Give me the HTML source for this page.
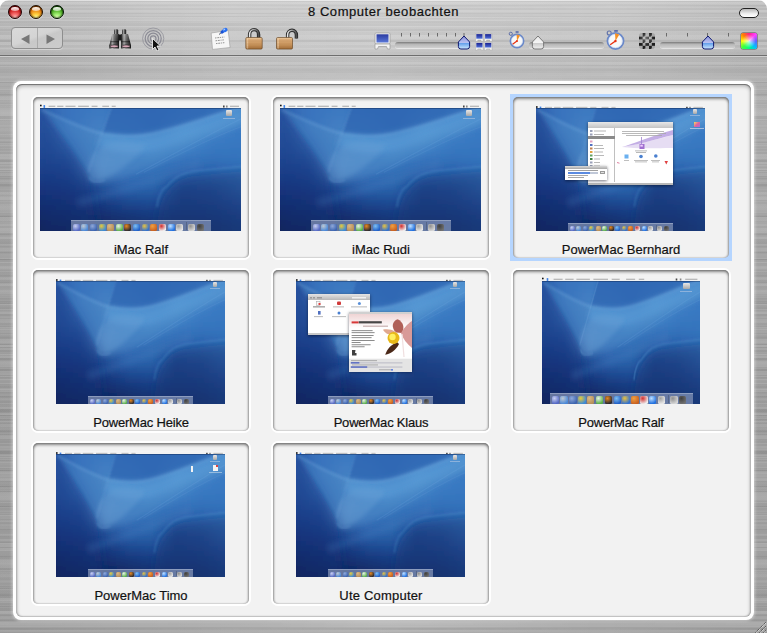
<!DOCTYPE html>
<html><head><meta charset="utf-8">
<style>

*{margin:0;padding:0;box-sizing:border-box}
html,body{width:767px;height:633px;overflow:hidden;background:#ffffff}
body{position:relative;font-family:"Liberation Sans",sans-serif}
.abs{position:absolute}
#metal{left:0;top:0;width:767px;height:633px;border-radius:9px 9px 0 0;
 background:linear-gradient(#f2f2f2 0,#f2f2f2 1px,#cdcdcd 1px,#c9c9c9 20px,#c4c4c4 54px,#c2c2c2 57px,#b8b8b8 90px,#ababab 250px,#a8a8a8 450px,#aaaaaa 633px)}
#sep{left:0;top:55px;width:767px;height:1px;background:#6e6e6e}
#sep2{left:0;top:56px;width:767px;height:1px;background:#cfcfcf}
#title{left:0;top:4px;width:767px;text-align:center;font-size:13px;letter-spacing:0.55px;color:#111;-webkit-text-stroke:.2px #111}
.tl{width:14px;height:14px;border-radius:50%;top:5px;box-shadow:0 1px 1px rgba(255,255,255,.45), inset 0 0 1px 1px rgba(0,0,0,.35)}
#panel{left:13px;top:81px;width:741px;height:539px;background:#fff;border-radius:8px;box-shadow:0 0 3px 1px rgba(255,255,255,.45)}
#panelin{left:16px;top:84px;width:735px;height:533px;background:#f2f2f2;border-radius:6px;
 box-shadow:inset 0 1px 0 rgba(0,0,0,.3), inset 0 2px 4px rgba(0,0,0,.3), inset 1px 0 2px rgba(0,0,0,.18), inset -1px 0 2px rgba(0,0,0,.18), inset 0 -1px 1px rgba(0,0,0,.08)}
.tile{width:220px;height:165px}
.tw{left:0;top:0;width:220px;height:165px;background:#fff;border-radius:7px}
.ti{left:2px;top:2px;width:216px;height:161px;background:#f2f2f2;border-radius:5px;
 box-shadow:inset 0 2px 3px rgba(0,0,0,.45), inset 1px 0 2px rgba(0,0,0,.2), inset -1px 0 2px rgba(0,0,0,.2)}
.sel{left:-1px;top:-1px;width:222px;height:167px;background:#b5d5ff}
.scr{top:10px;height:126px;background:#2b5ca8;overflow:hidden}
.mb{position:absolute;left:0;top:0;width:100%;height:5px;background:#f4f4f4}
.dk{position:absolute;left:0;bottom:0;display:block}
.lbl{left:0;top:147px;width:220px;text-align:center;font-size:13px;color:#111;-webkit-text-stroke:.2px #111}
.scr{background:#2b5ca8;overflow:hidden}
.mb{position:absolute;left:0;top:0;display:block}
.apl{position:absolute;left:4px;top:0;width:2px;height:100%;background:#4a8ae0}
.mbt{position:absolute;left:8px;top:1px;height:1px;background:repeating-linear-gradient(90deg,#9a9a9a 0 6px,transparent 6px 9px)}
.mbr{position:absolute;right:3px;top:1px;width:14px;height:1px;background:#9a9a9a}
.mbsh{position:absolute;left:0;width:100%;height:1px;background:rgba(0,10,40,.3)}
.dk{position:absolute;left:0;display:block}
.hd{position:absolute;width:6px;height:6px;background:linear-gradient(#e8e8e8,#a8a8a8);border-radius:1px}
.hdl{position:absolute;width:12px;height:1px;background:rgba(200,210,230,.5)}
.dock{position:absolute;bottom:0;background:rgba(170,180,205,.55);border-top:1px solid rgba(200,210,230,.4)}
.di{position:absolute;border-radius:1.5px}
.dsep{position:absolute;top:1px;bottom:1px;width:1px;background:rgba(60,70,90,.4)}
.tl{width:14px;height:14px;border-radius:50%;top:5px;box-shadow:0 1px 1px rgba(255,255,255,.45), inset 0 0 1px 1px rgba(0,0,0,.35)}
.tl::before{content:"";position:absolute;left:2px;top:1.2px;width:8px;height:3.5px;border-radius:50%/60% 60% 40% 40%;background:linear-gradient(rgba(255,255,255,.98),rgba(255,255,255,.55))}
.red{background:radial-gradient(circle at 50% 95%,#ffc8c0 0,#f87070 25%,#d02020 60%,#8a0808 85%,#400000 100%);border:1px solid #200000}
.ora{background:radial-gradient(circle at 50% 95%,#ffffa0 0,#ffd040 25%,#e88010 60%,#904000 85%,#402000 100%);border:1px solid #201000}
.grn{background:radial-gradient(circle at 50% 95%,#e0ffb8 0,#a0f070 25%,#48a820 60%,#1a5a08 85%,#0a2a00 100%);border:1px solid #001000}
#pill{left:739px;top:8px;width:20px;height:10px;border-radius:5px;border:1px solid #222;background:linear-gradient(#b8b8b8,#f0f0f0 60%,#ffffff)}
#nav{position:absolute;left:11px;top:27px;width:52px;height:22px;border-radius:4px;border:1px solid #8e8e8e;
 background:linear-gradient(160deg,#dadada 0,#d4d4d4 45%,#c8c8c8 55%,#cccccc 100%);box-shadow:0 1px 0 rgba(255,255,255,.35)}
#nav svg{left:-1px;top:-1px}
#navdiv{position:absolute;left:25px;top:0;width:1px;height:20px;background:#aaa}
.track{top:42px;height:6px;border-radius:3px;background:linear-gradient(#7a7a7a,#b8b8b8 40%,#d0d0d0);box-shadow:0 1px 0 rgba(255,255,255,.5)}
#checker{left:639px;top:33px;width:16px;height:16px;border-radius:3px;
 background:radial-gradient(circle at 45% 35%,rgba(255,255,255,.35),rgba(255,255,255,0) 55%),conic-gradient(#1e1e1e 0 25%,#a8a8a8 0 50%,#1e1e1e 0 75%,#a8a8a8 0) 0 0/6.4px 6.4px;filter:blur(.35px)}
#colors{left:741px;top:33px;width:16px;height:16px;border-radius:2px;
 background:radial-gradient(circle at 50% 50%,rgba(255,255,255,.8) 0,rgba(255,255,255,0) 60%),conic-gradient(from 0deg,#ff2080,#ff40ff,#6060ff,#00c0ff,#00ff80,#40ff40,#ffff00,#ff8000,#ff2080);box-shadow:0 0 0 .5px #555}
.w{position:absolute;background:#fff;box-shadow:0 1px 3px rgba(0,0,20,.55)}
.w i,.w svg{position:absolute}
.ws{position:absolute;display:block}
.wt{left:0;top:0;width:100%;background:linear-gradient(#d8d8d8,#a8a8a8)}
.wb{left:0;bottom:0;width:100%;height:2.5px;background:#b8b8b8}
#mhoriz{left:0;top:0;width:767px;height:633px;border-radius:9px 9px 0 0;background:linear-gradient(90deg,rgba(0,0,0,.05) 0%,rgba(255,255,255,0) 22%,rgba(255,255,255,.13) 50%,rgba(255,255,255,0) 78%,rgba(0,0,0,.03) 100%)}
#streaks{left:0;top:0;width:767px;height:633px;border-radius:9px 9px 0 0;background:linear-gradient(rgba(0,0,0,0.050) 0px 1px,rgba(0,0,0,0.038) 1px 2px,rgba(255,255,255,0.050) 2px 3px,rgba(255,255,255,0.050) 3px 4px,rgba(0,0,0,0.025) 4px 6px,rgba(255,255,255,0.024) 6px 7px,rgba(255,255,255,0.039) 7px 8px,rgba(0,0,0,0.031) 8px 10px,rgba(255,255,255,0.008) 10px 13px,rgba(0,0,0,0.050) 13px 14px,rgba(255,255,255,0.021) 14px 16px,rgba(0,0,0,0.050) 16px 17px,rgba(255,255,255,0.011) 17px 18px,rgba(255,255,255,0.002) 18px 20px,rgba(255,255,255,0.045) 20px 21px,rgba(0,0,0,0.018) 21px 22px,rgba(0,0,0,0.009) 22px 23px,rgba(0,0,0,0.050) 23px 26px,rgba(255,255,255,0.050) 26px 27px,rgba(0,0,0,0.024) 27px 28px,rgba(0,0,0,0.038) 28px 29px,rgba(0,0,0,0.050) 29px 30px,rgba(0,0,0,0.050) 30px 31px,rgba(255,255,255,0.050) 31px 33px,rgba(255,255,255,0.050) 33px 34px,rgba(255,255,255,0.050) 34px 37px,rgba(255,255,255,0.033) 37px 38px,rgba(255,255,255,0.031) 38px 40px,rgba(0,0,0,0.050) 40px 42px,rgba(0,0,0,0.001) 42px 44px,rgba(255,255,255,0.027) 44px 47px,rgba(0,0,0,0.017) 47px 48px,rgba(255,255,255,0.050) 48px 50px,rgba(0,0,0,0.010) 50px 52px,rgba(0,0,0,0.011) 52px 53px,rgba(0,0,0,0.007) 53px 54px,rgba(255,255,255,0.015) 54px 56px,rgba(0,0,0,0.049) 56px 57px,rgba(0,0,0,0.050) 57px 58px,rgba(0,0,0,0.024) 58px 60px,rgba(0,0,0,0.038) 60px 62px,rgba(255,255,255,0.038) 62px 64px,rgba(255,255,255,0.011) 64px 65px,rgba(0,0,0,0.050) 65px 66px,rgba(0,0,0,0.012) 66px 67px,rgba(255,255,255,0.001) 67px 68px,rgba(0,0,0,0.041) 68px 69px,rgba(0,0,0,0.050) 69px 71px,rgba(0,0,0,0.024) 71px 73px,rgba(255,255,255,0.019) 73px 75px,rgba(255,255,255,0.050) 75px 76px,rgba(0,0,0,0.010) 76px 78px,rgba(0,0,0,0.049) 78px 81px,rgba(0,0,0,0.015) 81px 82px,rgba(0,0,0,0.049) 82px 85px,rgba(0,0,0,0.026) 85px 86px,rgba(0,0,0,0.050) 86px 88px,rgba(0,0,0,0.037) 88px 89px,rgba(255,255,255,0.019) 89px 90px,rgba(0,0,0,0.050) 90px 92px,rgba(255,255,255,0.022) 92px 94px,rgba(0,0,0,0.050) 94px 96px,rgba(0,0,0,0.015) 96px 97px,rgba(255,255,255,0.008) 97px 100px,rgba(0,0,0,0.030) 100px 101px,rgba(0,0,0,0.014) 101px 103px,rgba(0,0,0,0.047) 103px 104px,rgba(255,255,255,0.004) 104px 105px,rgba(0,0,0,0.050) 105px 106px,rgba(0,0,0,0.017) 106px 108px,rgba(0,0,0,0.012) 108px 109px,rgba(255,255,255,0.003) 109px 110px,rgba(255,255,255,0.029) 110px 112px,rgba(255,255,255,0.050) 112px 115px,rgba(255,255,255,0.027) 115px 116px,rgba(0,0,0,0.050) 116px 119px,rgba(255,255,255,0.050) 119px 120px,rgba(255,255,255,0.024) 120px 121px,rgba(255,255,255,0.037) 121px 122px,rgba(0,0,0,0.040) 122px 125px,rgba(0,0,0,0.008) 125px 128px,rgba(255,255,255,0.039) 128px 131px,rgba(255,255,255,0.017) 131px 133px,rgba(255,255,255,0.038) 133px 134px,rgba(0,0,0,0.004) 134px 135px,rgba(255,255,255,0.050) 135px 137px,rgba(0,0,0,0.025) 137px 138px,rgba(0,0,0,0.034) 138px 140px,rgba(0,0,0,0.025) 140px 141px,rgba(255,255,255,0.001) 141px 142px,rgba(0,0,0,0.049) 142px 143px,rgba(255,255,255,0.050) 143px 144px,rgba(0,0,0,0.002) 144px 145px,rgba(255,255,255,0.050) 145px 146px,rgba(0,0,0,0.050) 146px 148px,rgba(255,255,255,0.050) 148px 149px,rgba(0,0,0,0.011) 149px 150px,rgba(255,255,255,0.008) 150px 151px,rgba(0,0,0,0.021) 151px 152px,rgba(0,0,0,0.050) 152px 154px,rgba(255,255,255,0.025) 154px 157px,rgba(255,255,255,0.050) 157px 160px,rgba(0,0,0,0.035) 160px 162px,rgba(0,0,0,0.004) 162px 164px,rgba(0,0,0,0.050) 164px 165px,rgba(255,255,255,0.040) 165px 166px,rgba(0,0,0,0.012) 166px 168px,rgba(0,0,0,0.013) 168px 169px,rgba(255,255,255,0.050) 169px 170px,rgba(0,0,0,0.020) 170px 171px,rgba(255,255,255,0.027) 171px 172px,rgba(0,0,0,0.033) 172px 173px,rgba(255,255,255,0.035) 173px 175px,rgba(255,255,255,0.050) 175px 176px,rgba(0,0,0,0.050) 176px 177px,rgba(0,0,0,0.036) 177px 179px,rgba(255,255,255,0.022) 179px 182px,rgba(255,255,255,0.050) 182px 183px,rgba(255,255,255,0.047) 183px 184px,rgba(0,0,0,0.050) 184px 187px,rgba(0,0,0,0.010) 187px 189px,rgba(0,0,0,0.010) 189px 190px,rgba(255,255,255,0.050) 190px 191px,rgba(255,255,255,0.038) 191px 192px,rgba(255,255,255,0.008) 192px 194px,rgba(255,255,255,0.022) 194px 196px,rgba(0,0,0,0.017) 196px 197px,rgba(255,255,255,0.050) 197px 198px,rgba(255,255,255,0.050) 198px 200px,rgba(0,0,0,0.050) 200px 201px,rgba(255,255,255,0.014) 201px 202px,rgba(255,255,255,0.042) 202px 204px,rgba(255,255,255,0.035) 204px 207px,rgba(255,255,255,0.040) 207px 208px,rgba(255,255,255,0.040) 208px 210px,rgba(255,255,255,0.028) 210px 212px,rgba(255,255,255,0.050) 212px 213px,rgba(0,0,0,0.049) 213px 215px,rgba(255,255,255,0.007) 215px 216px,rgba(0,0,0,0.050) 216px 217px,rgba(255,255,255,0.026) 217px 219px,rgba(255,255,255,0.007) 219px 220px,rgba(255,255,255,0.019) 220px 222px,rgba(255,255,255,0.050) 222px 224px,rgba(255,255,255,0.026) 224px 226px,rgba(0,0,0,0.040) 226px 227px,rgba(0,0,0,0.026) 227px 228px,rgba(255,255,255,0.050) 228px 230px,rgba(255,255,255,0.050) 230px 233px,rgba(0,0,0,0.030) 233px 234px,rgba(0,0,0,0.022) 234px 236px,rgba(0,0,0,0.007) 236px 237px,rgba(255,255,255,0.050) 237px 238px,rgba(255,255,255,0.045) 238px 241px,rgba(255,255,255,0.022) 241px 242px,rgba(0,0,0,0.040) 242px 244px,rgba(255,255,255,0.010) 244px 246px,rgba(0,0,0,0.048) 246px 248px,rgba(255,255,255,0.003) 248px 250px,rgba(255,255,255,0.020) 250px 251px,rgba(255,255,255,0.050) 251px 252px,rgba(0,0,0,0.041) 252px 253px,rgba(255,255,255,0.019) 253px 254px,rgba(0,0,0,0.014) 254px 255px,rgba(0,0,0,0.020) 255px 258px,rgba(255,255,255,0.050) 258px 259px,rgba(0,0,0,0.050) 259px 260px,rgba(255,255,255,0.048) 260px 263px,rgba(255,255,255,0.033) 263px 264px,rgba(255,255,255,0.050) 264px 266px,rgba(255,255,255,0.029) 266px 267px,rgba(255,255,255,0.047) 267px 269px,rgba(255,255,255,0.050) 269px 270px,rgba(255,255,255,0.050) 270px 271px,rgba(255,255,255,0.022) 271px 272px,rgba(0,0,0,0.050) 272px 275px,rgba(0,0,0,0.050) 275px 276px,rgba(0,0,0,0.024) 276px 277px,rgba(255,255,255,0.011) 277px 278px,rgba(255,255,255,0.042) 278px 279px,rgba(255,255,255,0.026) 279px 280px,rgba(0,0,0,0.050) 280px 282px,rgba(0,0,0,0.021) 282px 284px,rgba(255,255,255,0.045) 284px 285px,rgba(255,255,255,0.040) 285px 286px,rgba(255,255,255,0.017) 286px 288px,rgba(255,255,255,0.027) 288px 289px,rgba(255,255,255,0.022) 289px 291px,rgba(255,255,255,0.050) 291px 294px,rgba(0,0,0,0.008) 294px 296px,rgba(0,0,0,0.020) 296px 297px,rgba(0,0,0,0.033) 297px 299px,rgba(0,0,0,0.013) 299px 300px,rgba(255,255,255,0.035) 300px 301px,rgba(0,0,0,0.028) 301px 304px,rgba(255,255,255,0.050) 304px 305px,rgba(0,0,0,0.041) 305px 306px,rgba(0,0,0,0.050) 306px 307px,rgba(255,255,255,0.014) 307px 308px,rgba(0,0,0,0.003) 308px 309px,rgba(255,255,255,0.017) 309px 310px,rgba(0,0,0,0.050) 310px 311px,rgba(0,0,0,0.032) 311px 312px,rgba(255,255,255,0.050) 312px 314px,rgba(0,0,0,0.031) 314px 317px,rgba(0,0,0,0.021) 317px 318px,rgba(255,255,255,0.001) 318px 321px,rgba(255,255,255,0.019) 321px 323px,rgba(255,255,255,0.018) 323px 326px,rgba(255,255,255,0.009) 326px 328px,rgba(0,0,0,0.022) 328px 329px,rgba(255,255,255,0.050) 329px 330px,rgba(255,255,255,0.019) 330px 331px,rgba(0,0,0,0.022) 331px 333px,rgba(255,255,255,0.006) 333px 336px,rgba(0,0,0,0.019) 336px 338px,rgba(255,255,255,0.012) 338px 339px,rgba(255,255,255,0.026) 339px 340px,rgba(255,255,255,0.028) 340px 343px,rgba(0,0,0,0.032) 343px 345px,rgba(255,255,255,0.034) 345px 347px,rgba(0,0,0,0.050) 347px 348px,rgba(255,255,255,0.050) 348px 349px,rgba(255,255,255,0.050) 349px 350px,rgba(0,0,0,0.044) 350px 353px,rgba(255,255,255,0.050) 353px 356px,rgba(255,255,255,0.050) 356px 358px,rgba(0,0,0,0.050) 358px 360px,rgba(255,255,255,0.012) 360px 362px,rgba(255,255,255,0.040) 362px 364px,rgba(255,255,255,0.050) 364px 365px,rgba(255,255,255,0.030) 365px 366px,rgba(255,255,255,0.013) 366px 367px,rgba(0,0,0,0.050) 367px 368px,rgba(0,0,0,0.034) 368px 371px,rgba(255,255,255,0.016) 371px 372px,rgba(0,0,0,0.007) 372px 375px,rgba(0,0,0,0.002) 375px 378px,rgba(255,255,255,0.027) 378px 379px,rgba(255,255,255,0.050) 379px 382px,rgba(255,255,255,0.050) 382px 384px,rgba(0,0,0,0.050) 384px 385px,rgba(0,0,0,0.024) 385px 386px,rgba(0,0,0,0.050) 386px 388px,rgba(255,255,255,0.050) 388px 389px,rgba(255,255,255,0.050) 389px 390px,rgba(0,0,0,0.028) 390px 391px,rgba(0,0,0,0.012) 391px 392px,rgba(0,0,0,0.031) 392px 393px,rgba(255,255,255,0.003) 393px 394px,rgba(255,255,255,0.050) 394px 396px,rgba(0,0,0,0.050) 396px 398px,rgba(0,0,0,0.004) 398px 400px,rgba(0,0,0,0.037) 400px 401px,rgba(0,0,0,0.035) 401px 403px,rgba(255,255,255,0.005) 403px 404px,rgba(0,0,0,0.050) 404px 405px,rgba(0,0,0,0.040) 405px 407px,rgba(255,255,255,0.035) 407px 408px,rgba(0,0,0,0.006) 408px 409px,rgba(0,0,0,0.050) 409px 412px,rgba(0,0,0,0.008) 412px 413px,rgba(255,255,255,0.010) 413px 415px,rgba(0,0,0,0.050) 415px 416px,rgba(0,0,0,0.034) 416px 417px,rgba(0,0,0,0.050) 417px 418px,rgba(0,0,0,0.025) 418px 419px,rgba(0,0,0,0.050) 419px 421px,rgba(255,255,255,0.050) 421px 422px,rgba(0,0,0,0.050) 422px 424px,rgba(0,0,0,0.021) 424px 426px,rgba(255,255,255,0.020) 426px 427px,rgba(255,255,255,0.050) 427px 428px,rgba(0,0,0,0.029) 428px 431px,rgba(0,0,0,0.050) 431px 432px,rgba(255,255,255,0.002) 432px 434px,rgba(0,0,0,0.050) 434px 435px,rgba(255,255,255,0.050) 435px 437px,rgba(255,255,255,0.050) 437px 439px,rgba(0,0,0,0.002) 439px 440px,rgba(0,0,0,0.001) 440px 443px,rgba(255,255,255,0.023) 443px 445px,rgba(255,255,255,0.026) 445px 446px,rgba(0,0,0,0.007) 446px 449px,rgba(255,255,255,0.040) 449px 451px,rgba(0,0,0,0.050) 451px 453px,rgba(0,0,0,0.050) 453px 454px,rgba(255,255,255,0.038) 454px 457px,rgba(255,255,255,0.050) 457px 458px,rgba(0,0,0,0.040) 458px 459px,rgba(255,255,255,0.045) 459px 460px,rgba(0,0,0,0.029) 460px 462px,rgba(255,255,255,0.024) 462px 463px,rgba(0,0,0,0.006) 463px 465px,rgba(0,0,0,0.021) 465px 467px,rgba(255,255,255,0.014) 467px 468px,rgba(255,255,255,0.001) 468px 469px,rgba(255,255,255,0.050) 469px 470px,rgba(0,0,0,0.050) 470px 471px,rgba(0,0,0,0.012) 471px 472px,rgba(255,255,255,0.037) 472px 474px,rgba(0,0,0,0.006) 474px 475px,rgba(255,255,255,0.013) 475px 476px,rgba(255,255,255,0.025) 476px 477px,rgba(0,0,0,0.032) 477px 478px,rgba(255,255,255,0.050) 478px 481px,rgba(0,0,0,0.050) 481px 483px,rgba(255,255,255,0.033) 483px 486px,rgba(0,0,0,0.050) 486px 487px,rgba(0,0,0,0.016) 487px 490px,rgba(255,255,255,0.008) 490px 491px,rgba(0,0,0,0.050) 491px 492px,rgba(0,0,0,0.005) 492px 493px,rgba(255,255,255,0.023) 493px 496px,rgba(255,255,255,0.050) 496px 497px,rgba(255,255,255,0.050) 497px 499px,rgba(255,255,255,0.050) 499px 500px,rgba(0,0,0,0.018) 500px 502px,rgba(255,255,255,0.043) 502px 503px,rgba(255,255,255,0.022) 503px 506px,rgba(0,0,0,0.050) 506px 507px,rgba(255,255,255,0.029) 507px 510px,rgba(0,0,0,0.011) 510px 512px,rgba(255,255,255,0.023) 512px 514px,rgba(0,0,0,0.037) 514px 515px,rgba(255,255,255,0.050) 515px 516px,rgba(0,0,0,0.008) 516px 519px,rgba(0,0,0,0.050) 519px 520px,rgba(255,255,255,0.043) 520px 522px,rgba(0,0,0,0.024) 522px 524px,rgba(255,255,255,0.050) 524px 525px,rgba(0,0,0,0.002) 525px 527px,rgba(255,255,255,0.029) 527px 529px,rgba(0,0,0,0.050) 529px 530px,rgba(255,255,255,0.026) 530px 532px,rgba(0,0,0,0.044) 532px 534px,rgba(255,255,255,0.043) 534px 536px,rgba(0,0,0,0.003) 536px 537px,rgba(0,0,0,0.045) 537px 538px,rgba(0,0,0,0.042) 538px 539px,rgba(255,255,255,0.050) 539px 541px,rgba(255,255,255,0.001) 541px 542px,rgba(0,0,0,0.036) 542px 543px,rgba(255,255,255,0.050) 543px 545px,rgba(255,255,255,0.050) 545px 547px,rgba(0,0,0,0.050) 547px 548px,rgba(255,255,255,0.002) 548px 550px,rgba(255,255,255,0.050) 550px 551px,rgba(255,255,255,0.050) 551px 553px,rgba(255,255,255,0.010) 553px 554px,rgba(255,255,255,0.009) 554px 556px,rgba(0,0,0,0.049) 556px 557px,rgba(255,255,255,0.009) 557px 560px,rgba(255,255,255,0.018) 560px 563px,rgba(255,255,255,0.050) 563px 565px,rgba(255,255,255,0.007) 565px 568px,rgba(0,0,0,0.050) 568px 570px,rgba(255,255,255,0.040) 570px 571px,rgba(0,0,0,0.038) 571px 572px,rgba(255,255,255,0.009) 572px 573px,rgba(0,0,0,0.040) 573px 574px,rgba(0,0,0,0.003) 574px 575px,rgba(0,0,0,0.016) 575px 577px,rgba(0,0,0,0.010) 577px 578px,rgba(0,0,0,0.028) 578px 580px,rgba(255,255,255,0.011) 580px 582px,rgba(0,0,0,0.019) 582px 583px,rgba(0,0,0,0.047) 583px 585px,rgba(0,0,0,0.027) 585px 586px,rgba(0,0,0,0.021) 586px 587px,rgba(255,255,255,0.030) 587px 588px,rgba(0,0,0,0.026) 588px 589px,rgba(255,255,255,0.030) 589px 591px,rgba(0,0,0,0.050) 591px 592px,rgba(0,0,0,0.050) 592px 593px,rgba(0,0,0,0.006) 593px 594px,rgba(0,0,0,0.045) 594px 595px,rgba(0,0,0,0.050) 595px 598px,rgba(0,0,0,0.008) 598px 600px,rgba(255,255,255,0.050) 600px 601px,rgba(0,0,0,0.029) 601px 602px,rgba(0,0,0,0.012) 602px 605px,rgba(255,255,255,0.030) 605px 606px,rgba(0,0,0,0.033) 606px 607px,rgba(255,255,255,0.050) 607px 608px,rgba(0,0,0,0.018) 608px 611px,rgba(255,255,255,0.050) 611px 613px,rgba(255,255,255,0.020) 613px 615px,rgba(0,0,0,0.022) 615px 616px,rgba(255,255,255,0.049) 616px 619px,rgba(255,255,255,0.007) 619px 620px,rgba(0,0,0,0.032) 620px 622px,rgba(255,255,255,0.050) 622px 624px,rgba(255,255,255,0.050) 624px 625px,rgba(255,255,255,0.050) 625px 627px,rgba(0,0,0,0.042) 627px 629px,rgba(0,0,0,0.029) 629px 630px,rgba(255,255,255,0.008) 630px 633px)}
#streaks2{left:0;top:0;width:767px;height:633px;border-radius:9px 9px 0 0;background:linear-gradient(rgba(255,255,255,0.016) 0px 3px,rgba(0,0,0,0.005) 3px 4px,rgba(255,255,255,0.042) 4px 5px,rgba(0,0,0,0.050) 5px 7px,rgba(0,0,0,0.024) 7px 10px,rgba(255,255,255,0.050) 10px 12px,rgba(0,0,0,0.026) 12px 13px,rgba(0,0,0,0.014) 13px 14px,rgba(0,0,0,0.050) 14px 16px,rgba(255,255,255,0.050) 16px 18px,rgba(0,0,0,0.050) 18px 19px,rgba(0,0,0,0.015) 19px 20px,rgba(255,255,255,0.033) 20px 21px,rgba(0,0,0,0.034) 21px 22px,rgba(0,0,0,0.050) 22px 23px,rgba(255,255,255,0.048) 23px 24px,rgba(255,255,255,0.016) 24px 26px,rgba(255,255,255,0.033) 26px 27px,rgba(255,255,255,0.028) 27px 28px,rgba(255,255,255,0.050) 28px 29px,rgba(0,0,0,0.014) 29px 31px,rgba(0,0,0,0.028) 31px 32px,rgba(0,0,0,0.050) 32px 35px,rgba(255,255,255,0.031) 35px 38px,rgba(255,255,255,0.012) 38px 39px,rgba(0,0,0,0.045) 39px 42px,rgba(255,255,255,0.044) 42px 43px,rgba(255,255,255,0.050) 43px 45px,rgba(0,0,0,0.050) 45px 47px,rgba(255,255,255,0.015) 47px 48px,rgba(255,255,255,0.050) 48px 49px,rgba(0,0,0,0.027) 49px 52px,rgba(0,0,0,0.050) 52px 55px,rgba(255,255,255,0.050) 55px 56px,rgba(0,0,0,0.050) 56px 57px,rgba(0,0,0,0.046) 57px 59px,rgba(0,0,0,0.035) 59px 60px,rgba(255,255,255,0.003) 60px 61px,rgba(0,0,0,0.009) 61px 64px,rgba(0,0,0,0.029) 64px 66px,rgba(255,255,255,0.008) 66px 67px,rgba(0,0,0,0.050) 67px 68px,rgba(0,0,0,0.016) 68px 71px,rgba(0,0,0,0.050) 71px 73px,rgba(0,0,0,0.039) 73px 75px,rgba(0,0,0,0.050) 75px 76px,rgba(255,255,255,0.016) 76px 78px,rgba(255,255,255,0.050) 78px 80px,rgba(255,255,255,0.050) 80px 82px,rgba(0,0,0,0.050) 82px 83px,rgba(255,255,255,0.050) 83px 85px,rgba(255,255,255,0.005) 85px 87px,rgba(255,255,255,0.050) 87px 88px,rgba(255,255,255,0.026) 88px 89px,rgba(255,255,255,0.015) 89px 91px,rgba(255,255,255,0.050) 91px 92px,rgba(0,0,0,0.050) 92px 95px,rgba(0,0,0,0.014) 95px 96px,rgba(255,255,255,0.025) 96px 99px,rgba(255,255,255,0.050) 99px 100px,rgba(255,255,255,0.001) 100px 102px,rgba(0,0,0,0.017) 102px 103px,rgba(255,255,255,0.000) 103px 104px,rgba(255,255,255,0.011) 104px 105px,rgba(255,255,255,0.050) 105px 106px,rgba(255,255,255,0.013) 106px 107px,rgba(0,0,0,0.003) 107px 108px,rgba(255,255,255,0.050) 108px 109px,rgba(255,255,255,0.031) 109px 111px,rgba(255,255,255,0.050) 111px 112px,rgba(255,255,255,0.050) 112px 114px,rgba(255,255,255,0.041) 114px 115px,rgba(255,255,255,0.050) 115px 116px,rgba(255,255,255,0.003) 116px 118px,rgba(0,0,0,0.001) 118px 120px,rgba(0,0,0,0.041) 120px 121px,rgba(0,0,0,0.023) 121px 122px,rgba(255,255,255,0.050) 122px 124px,rgba(255,255,255,0.038) 124px 126px,rgba(255,255,255,0.011) 126px 127px,rgba(0,0,0,0.021) 127px 130px,rgba(0,0,0,0.020) 130px 131px,rgba(0,0,0,0.023) 131px 132px,rgba(0,0,0,0.037) 132px 133px,rgba(0,0,0,0.050) 133px 134px,rgba(255,255,255,0.033) 134px 135px,rgba(0,0,0,0.043) 135px 137px,rgba(0,0,0,0.025) 137px 139px,rgba(255,255,255,0.050) 139px 140px,rgba(255,255,255,0.050) 140px 141px,rgba(0,0,0,0.041) 141px 142px,rgba(0,0,0,0.032) 142px 143px,rgba(0,0,0,0.026) 143px 145px,rgba(0,0,0,0.010) 145px 146px,rgba(255,255,255,0.029) 146px 147px,rgba(255,255,255,0.006) 147px 148px,rgba(0,0,0,0.039) 148px 149px,rgba(0,0,0,0.045) 149px 151px,rgba(255,255,255,0.036) 151px 152px,rgba(0,0,0,0.001) 152px 153px,rgba(0,0,0,0.000) 153px 154px,rgba(255,255,255,0.050) 154px 156px,rgba(255,255,255,0.024) 156px 159px,rgba(0,0,0,0.050) 159px 160px,rgba(0,0,0,0.050) 160px 162px,rgba(255,255,255,0.028) 162px 163px,rgba(255,255,255,0.050) 163px 164px,rgba(255,255,255,0.011) 164px 165px,rgba(0,0,0,0.006) 165px 167px,rgba(0,0,0,0.037) 167px 168px,rgba(255,255,255,0.015) 168px 169px,rgba(255,255,255,0.033) 169px 170px,rgba(0,0,0,0.050) 170px 171px,rgba(0,0,0,0.007) 171px 172px,rgba(0,0,0,0.022) 172px 174px,rgba(0,0,0,0.027) 174px 177px,rgba(0,0,0,0.007) 177px 178px,rgba(0,0,0,0.050) 178px 180px,rgba(0,0,0,0.014) 180px 181px,rgba(0,0,0,0.008) 181px 182px,rgba(0,0,0,0.050) 182px 184px,rgba(0,0,0,0.050) 184px 186px,rgba(0,0,0,0.010) 186px 189px,rgba(255,255,255,0.001) 189px 190px,rgba(0,0,0,0.050) 190px 192px,rgba(255,255,255,0.050) 192px 193px,rgba(255,255,255,0.050) 193px 194px,rgba(255,255,255,0.009) 194px 195px,rgba(0,0,0,0.033) 195px 196px,rgba(255,255,255,0.050) 196px 198px,rgba(255,255,255,0.050) 198px 201px,rgba(255,255,255,0.005) 201px 202px,rgba(0,0,0,0.034) 202px 204px,rgba(255,255,255,0.003) 204px 206px,rgba(255,255,255,0.037) 206px 208px,rgba(255,255,255,0.018) 208px 209px,rgba(255,255,255,0.018) 209px 210px,rgba(0,0,0,0.008) 210px 213px,rgba(255,255,255,0.023) 213px 214px,rgba(255,255,255,0.050) 214px 215px,rgba(0,0,0,0.050) 215px 217px,rgba(255,255,255,0.019) 217px 218px,rgba(0,0,0,0.001) 218px 219px,rgba(255,255,255,0.026) 219px 221px,rgba(0,0,0,0.025) 221px 224px,rgba(255,255,255,0.043) 224px 225px,rgba(255,255,255,0.050) 225px 227px,rgba(255,255,255,0.043) 227px 228px,rgba(255,255,255,0.050) 228px 231px,rgba(255,255,255,0.021) 231px 232px,rgba(255,255,255,0.027) 232px 233px,rgba(0,0,0,0.007) 233px 234px,rgba(0,0,0,0.050) 234px 235px,rgba(255,255,255,0.010) 235px 237px,rgba(255,255,255,0.039) 237px 239px,rgba(0,0,0,0.050) 239px 242px,rgba(0,0,0,0.011) 242px 244px,rgba(255,255,255,0.035) 244px 245px,rgba(0,0,0,0.003) 245px 247px,rgba(255,255,255,0.050) 247px 249px,rgba(255,255,255,0.050) 249px 251px,rgba(0,0,0,0.033) 251px 254px,rgba(255,255,255,0.039) 254px 256px,rgba(255,255,255,0.027) 256px 258px,rgba(255,255,255,0.037) 258px 259px,rgba(0,0,0,0.050) 259px 262px,rgba(255,255,255,0.050) 262px 263px,rgba(0,0,0,0.040) 263px 266px,rgba(255,255,255,0.050) 266px 268px,rgba(255,255,255,0.032) 268px 269px,rgba(0,0,0,0.027) 269px 270px,rgba(0,0,0,0.050) 270px 271px,rgba(255,255,255,0.019) 271px 272px,rgba(255,255,255,0.036) 272px 273px,rgba(255,255,255,0.050) 273px 275px,rgba(0,0,0,0.011) 275px 276px,rgba(0,0,0,0.018) 276px 277px,rgba(255,255,255,0.033) 277px 279px,rgba(255,255,255,0.014) 279px 280px,rgba(255,255,255,0.026) 280px 282px,rgba(0,0,0,0.050) 282px 283px,rgba(255,255,255,0.050) 283px 286px,rgba(0,0,0,0.025) 286px 289px,rgba(0,0,0,0.012) 289px 290px,rgba(255,255,255,0.050) 290px 292px,rgba(255,255,255,0.012) 292px 294px,rgba(0,0,0,0.013) 294px 295px,rgba(255,255,255,0.010) 295px 296px,rgba(0,0,0,0.002) 296px 297px,rgba(255,255,255,0.050) 297px 298px,rgba(0,0,0,0.028) 298px 300px,rgba(0,0,0,0.038) 300px 302px,rgba(0,0,0,0.025) 302px 303px,rgba(0,0,0,0.050) 303px 304px,rgba(255,255,255,0.034) 304px 307px,rgba(0,0,0,0.050) 307px 309px,rgba(255,255,255,0.035) 309px 311px,rgba(255,255,255,0.050) 311px 312px,rgba(255,255,255,0.037) 312px 314px,rgba(0,0,0,0.022) 314px 316px,rgba(255,255,255,0.047) 316px 318px,rgba(0,0,0,0.031) 318px 319px,rgba(255,255,255,0.042) 319px 322px,rgba(255,255,255,0.028) 322px 323px,rgba(0,0,0,0.045) 323px 325px,rgba(0,0,0,0.021) 325px 326px,rgba(0,0,0,0.049) 326px 327px,rgba(255,255,255,0.041) 327px 330px,rgba(0,0,0,0.017) 330px 331px,rgba(255,255,255,0.050) 331px 333px,rgba(0,0,0,0.050) 333px 334px,rgba(255,255,255,0.004) 334px 335px,rgba(0,0,0,0.025) 335px 337px,rgba(0,0,0,0.050) 337px 339px,rgba(255,255,255,0.036) 339px 341px,rgba(255,255,255,0.050) 341px 344px,rgba(0,0,0,0.050) 344px 345px,rgba(255,255,255,0.050) 345px 347px,rgba(0,0,0,0.009) 347px 350px,rgba(0,0,0,0.016) 350px 352px,rgba(255,255,255,0.050) 352px 353px,rgba(0,0,0,0.050) 353px 354px,rgba(255,255,255,0.040) 354px 355px,rgba(0,0,0,0.039) 355px 356px,rgba(255,255,255,0.001) 356px 358px,rgba(0,0,0,0.031) 358px 361px,rgba(255,255,255,0.038) 361px 364px,rgba(0,0,0,0.001) 364px 366px,rgba(255,255,255,0.040) 366px 369px,rgba(0,0,0,0.050) 369px 370px,rgba(0,0,0,0.050) 370px 371px,rgba(255,255,255,0.001) 371px 373px,rgba(255,255,255,0.023) 373px 374px,rgba(255,255,255,0.034) 374px 375px,rgba(0,0,0,0.042) 375px 376px,rgba(255,255,255,0.046) 376px 377px,rgba(0,0,0,0.050) 377px 379px,rgba(255,255,255,0.036) 379px 380px,rgba(0,0,0,0.034) 380px 381px,rgba(0,0,0,0.046) 381px 383px,rgba(255,255,255,0.017) 383px 385px,rgba(0,0,0,0.010) 385px 388px,rgba(0,0,0,0.024) 388px 389px,rgba(255,255,255,0.050) 389px 392px,rgba(0,0,0,0.028) 392px 393px,rgba(0,0,0,0.041) 393px 396px,rgba(0,0,0,0.034) 396px 397px,rgba(0,0,0,0.002) 397px 399px,rgba(255,255,255,0.016) 399px 401px,rgba(0,0,0,0.023) 401px 403px,rgba(255,255,255,0.012) 403px 405px,rgba(255,255,255,0.008) 405px 406px,rgba(255,255,255,0.005) 406px 408px,rgba(255,255,255,0.040) 408px 409px,rgba(0,0,0,0.040) 409px 410px,rgba(0,0,0,0.050) 410px 413px,rgba(255,255,255,0.011) 413px 414px,rgba(255,255,255,0.046) 414px 415px,rgba(0,0,0,0.038) 415px 416px,rgba(255,255,255,0.045) 416px 419px,rgba(0,0,0,0.026) 419px 420px,rgba(255,255,255,0.006) 420px 422px,rgba(255,255,255,0.035) 422px 423px,rgba(0,0,0,0.002) 423px 424px,rgba(255,255,255,0.050) 424px 425px,rgba(255,255,255,0.050) 425px 426px,rgba(255,255,255,0.001) 426px 427px,rgba(0,0,0,0.050) 427px 428px,rgba(255,255,255,0.017) 428px 429px,rgba(255,255,255,0.021) 429px 430px,rgba(0,0,0,0.046) 430px 433px,rgba(0,0,0,0.015) 433px 436px,rgba(0,0,0,0.000) 436px 439px,rgba(0,0,0,0.041) 439px 441px,rgba(0,0,0,0.050) 441px 443px,rgba(0,0,0,0.001) 443px 444px,rgba(0,0,0,0.050) 444px 446px,rgba(255,255,255,0.047) 446px 448px,rgba(255,255,255,0.003) 448px 450px,rgba(0,0,0,0.050) 450px 451px,rgba(0,0,0,0.050) 451px 453px,rgba(0,0,0,0.050) 453px 454px,rgba(0,0,0,0.025) 454px 455px,rgba(255,255,255,0.019) 455px 456px,rgba(0,0,0,0.050) 456px 457px,rgba(255,255,255,0.015) 457px 458px,rgba(255,255,255,0.025) 458px 459px,rgba(0,0,0,0.006) 459px 460px,rgba(0,0,0,0.028) 460px 461px,rgba(255,255,255,0.038) 461px 463px,rgba(0,0,0,0.004) 463px 466px,rgba(0,0,0,0.005) 466px 467px,rgba(255,255,255,0.031) 467px 468px,rgba(0,0,0,0.050) 468px 470px,rgba(0,0,0,0.050) 470px 471px,rgba(255,255,255,0.021) 471px 472px,rgba(255,255,255,0.017) 472px 473px,rgba(255,255,255,0.050) 473px 474px,rgba(255,255,255,0.011) 474px 477px,rgba(255,255,255,0.036) 477px 478px,rgba(0,0,0,0.000) 478px 479px,rgba(255,255,255,0.046) 479px 480px,rgba(255,255,255,0.004) 480px 482px,rgba(255,255,255,0.050) 482px 483px,rgba(0,0,0,0.041) 483px 484px,rgba(0,0,0,0.050) 484px 487px,rgba(255,255,255,0.008) 487px 488px,rgba(255,255,255,0.016) 488px 489px,rgba(0,0,0,0.006) 489px 492px,rgba(255,255,255,0.044) 492px 494px,rgba(255,255,255,0.050) 494px 497px,rgba(255,255,255,0.048) 497px 499px,rgba(255,255,255,0.035) 499px 501px,rgba(0,0,0,0.010) 501px 502px,rgba(255,255,255,0.006) 502px 503px,rgba(0,0,0,0.050) 503px 506px,rgba(0,0,0,0.050) 506px 507px,rgba(0,0,0,0.019) 507px 508px,rgba(0,0,0,0.050) 508px 510px,rgba(0,0,0,0.005) 510px 511px,rgba(255,255,255,0.030) 511px 512px,rgba(0,0,0,0.046) 512px 513px,rgba(0,0,0,0.015) 513px 514px,rgba(0,0,0,0.002) 514px 515px,rgba(255,255,255,0.026) 515px 516px,rgba(0,0,0,0.001) 516px 518px,rgba(255,255,255,0.017) 518px 520px,rgba(0,0,0,0.010) 520px 521px,rgba(255,255,255,0.002) 521px 522px,rgba(0,0,0,0.006) 522px 523px,rgba(0,0,0,0.018) 523px 525px,rgba(255,255,255,0.025) 525px 526px,rgba(0,0,0,0.011) 526px 527px,rgba(0,0,0,0.019) 527px 530px,rgba(0,0,0,0.050) 530px 532px,rgba(255,255,255,0.021) 532px 533px,rgba(255,255,255,0.025) 533px 534px,rgba(255,255,255,0.011) 534px 535px,rgba(0,0,0,0.021) 535px 536px,rgba(0,0,0,0.050) 536px 537px,rgba(0,0,0,0.005) 537px 538px,rgba(0,0,0,0.002) 538px 541px,rgba(0,0,0,0.032) 541px 543px,rgba(255,255,255,0.050) 543px 544px,rgba(0,0,0,0.002) 544px 545px,rgba(255,255,255,0.002) 545px 547px,rgba(255,255,255,0.001) 547px 548px,rgba(255,255,255,0.050) 548px 551px,rgba(0,0,0,0.050) 551px 552px,rgba(0,0,0,0.047) 552px 553px,rgba(0,0,0,0.030) 553px 555px,rgba(0,0,0,0.040) 555px 557px,rgba(0,0,0,0.050) 557px 559px,rgba(0,0,0,0.005) 559px 560px,rgba(255,255,255,0.050) 560px 562px,rgba(255,255,255,0.050) 562px 564px,rgba(255,255,255,0.016) 564px 565px,rgba(255,255,255,0.030) 565px 566px,rgba(255,255,255,0.016) 566px 567px,rgba(255,255,255,0.021) 567px 568px,rgba(0,0,0,0.007) 568px 571px,rgba(255,255,255,0.022) 571px 572px,rgba(0,0,0,0.009) 572px 573px,rgba(255,255,255,0.050) 573px 574px,rgba(255,255,255,0.010) 574px 575px,rgba(255,255,255,0.050) 575px 577px,rgba(0,0,0,0.007) 577px 579px,rgba(0,0,0,0.010) 579px 581px,rgba(255,255,255,0.010) 581px 584px,rgba(255,255,255,0.031) 584px 586px,rgba(0,0,0,0.043) 586px 587px,rgba(0,0,0,0.050) 587px 589px,rgba(0,0,0,0.017) 589px 590px,rgba(0,0,0,0.050) 590px 591px,rgba(255,255,255,0.013) 591px 593px,rgba(0,0,0,0.050) 593px 596px,rgba(0,0,0,0.011) 596px 597px,rgba(0,0,0,0.008) 597px 598px,rgba(255,255,255,0.049) 598px 599px,rgba(255,255,255,0.050) 599px 600px,rgba(255,255,255,0.050) 600px 603px,rgba(0,0,0,0.038) 603px 606px,rgba(0,0,0,0.050) 606px 607px,rgba(0,0,0,0.050) 607px 608px,rgba(0,0,0,0.042) 608px 611px,rgba(255,255,255,0.050) 611px 614px,rgba(0,0,0,0.047) 614px 616px,rgba(0,0,0,0.022) 616px 617px,rgba(0,0,0,0.010) 617px 619px,rgba(0,0,0,0.050) 619px 621px,rgba(255,255,255,0.050) 621px 624px,rgba(255,255,255,0.050) 624px 625px,rgba(255,255,255,0.010) 625px 626px,rgba(255,255,255,0.044) 626px 628px,rgba(0,0,0,0.048) 628px 630px,rgba(255,255,255,0.038) 630px 631px,rgba(255,255,255,0.011) 631px 632px,rgba(0,0,0,0.050) 632px 635px);-webkit-mask-image:linear-gradient(90deg,#000 0,transparent 30%,#000 55%,transparent 80%,#000 100%);mask-image:linear-gradient(90deg,#000 0,transparent 30%,#000 55%,transparent 80%,#000 100%)}

</style></head><body>
<svg width="0" height="0" style="position:absolute"><defs><filter id="bg" filterUnits="userSpaceOnUse" x="-25" y="-25" width="251" height="173"><feGaussianBlur stdDeviation="3"/></filter>
<filter id="b05" x="-.2" y="-.2" width="1.4" height="1.4"><feGaussianBlur stdDeviation=".5"/></filter>
<filter id="b1" x="-.2" y="-.2" width="1.4" height="1.4"><feGaussianBlur stdDeviation="1"/></filter>
<filter id="b15" x="-.2" y="-.2" width="1.4" height="1.4"><feGaussianBlur stdDeviation="1.5"/></filter>
<filter id="b2" filterUnits="userSpaceOnUse" x="-30" y="-30" width="261" height="183"><feGaussianBlur stdDeviation="2"/></filter>
<filter id="b3" filterUnits="userSpaceOnUse" x="-30" y="-30" width="261" height="183"><feGaussianBlur stdDeviation="3"/></filter>
<filter id="b4" filterUnits="userSpaceOnUse" x="-30" y="-30" width="261" height="183"><feGaussianBlur stdDeviation="4"/></filter>
<filter id="b6" filterUnits="userSpaceOnUse" x="-30" y="-30" width="261" height="183"><feGaussianBlur stdDeviation="6"/></filter></defs><symbol id="wp" viewBox="0 0 201 122.5" preserveAspectRatio="none">
<g filter="url(#bg)"><rect x="-20.00" y="-20.00" width="26.52" height="26.60" fill="#2c5ead"/><rect x="5.03" y="-20.00" width="6.53" height="26.60" fill="#2f62b0"/><rect x="10.05" y="-20.00" width="6.53" height="26.60" fill="#3166b3"/><rect x="15.08" y="-20.00" width="6.53" height="26.60" fill="#346ab7"/><rect x="20.10" y="-20.00" width="6.53" height="26.60" fill="#376fba"/><rect x="25.12" y="-20.00" width="6.53" height="26.60" fill="#3973bd"/><rect x="30.15" y="-20.00" width="6.53" height="26.60" fill="#3b75be"/><rect x="35.18" y="-20.00" width="6.53" height="26.60" fill="#3c76bf"/><rect x="40.20" y="-20.00" width="6.53" height="26.60" fill="#3d78c0"/><rect x="45.23" y="-20.00" width="6.53" height="26.60" fill="#3e79c1"/><rect x="50.25" y="-20.00" width="6.53" height="26.60" fill="#3f7ac2"/><rect x="55.28" y="-20.00" width="6.53" height="26.60" fill="#3f7bc2"/><rect x="60.30" y="-20.00" width="6.53" height="26.60" fill="#3f7bc2"/><rect x="65.33" y="-20.00" width="6.53" height="26.60" fill="#3e7ac2"/><rect x="70.35" y="-20.00" width="6.53" height="26.60" fill="#3d79c2"/><rect x="75.38" y="-20.00" width="6.53" height="26.60" fill="#3c79c1"/><rect x="80.40" y="-20.00" width="6.53" height="26.60" fill="#3c78c1"/><rect x="85.43" y="-20.00" width="6.53" height="26.60" fill="#3b77c1"/><rect x="90.45" y="-20.00" width="6.53" height="26.60" fill="#3a76c0"/><rect x="95.48" y="-20.00" width="6.53" height="26.60" fill="#3975bf"/><rect x="100.50" y="-20.00" width="6.53" height="26.60" fill="#3875bf"/><rect x="105.53" y="-20.00" width="6.53" height="26.60" fill="#3874be"/><rect x="110.55" y="-20.00" width="6.53" height="26.60" fill="#3773bd"/><rect x="115.58" y="-20.00" width="6.53" height="26.60" fill="#3774be"/><rect x="120.60" y="-20.00" width="6.53" height="26.60" fill="#3975bf"/><rect x="125.63" y="-20.00" width="6.53" height="26.60" fill="#3a77c1"/><rect x="130.65" y="-20.00" width="6.53" height="26.60" fill="#3b79c2"/><rect x="135.68" y="-20.00" width="6.53" height="26.60" fill="#3c7ac4"/><rect x="140.70" y="-20.00" width="6.53" height="26.60" fill="#3e7cc5"/><rect x="145.73" y="-20.00" width="6.53" height="26.60" fill="#3f7ec6"/><rect x="150.75" y="-20.00" width="6.53" height="26.60" fill="#407fc7"/><rect x="155.78" y="-20.00" width="6.53" height="26.60" fill="#4281c8"/><rect x="160.80" y="-20.00" width="6.53" height="26.60" fill="#4383c9"/><rect x="165.83" y="-20.00" width="6.53" height="26.60" fill="#4484ca"/><rect x="170.85" y="-20.00" width="6.53" height="26.60" fill="#4585ca"/><rect x="175.88" y="-20.00" width="6.53" height="26.60" fill="#4484ca"/><rect x="180.90" y="-20.00" width="6.53" height="26.60" fill="#4282c9"/><rect x="185.93" y="-20.00" width="6.53" height="26.60" fill="#4181c8"/><rect x="190.95" y="-20.00" width="6.53" height="26.60" fill="#3f80c7"/><rect x="195.98" y="-20.00" width="26.52" height="26.60" fill="#3d7ec6"/><rect x="-20.00" y="5.10" width="26.52" height="6.60" fill="#2b5cac"/><rect x="5.03" y="5.10" width="6.53" height="6.60" fill="#2e61af"/><rect x="10.05" y="5.10" width="6.53" height="6.60" fill="#3165b3"/><rect x="15.08" y="5.10" width="6.53" height="6.60" fill="#346ab6"/><rect x="20.10" y="5.10" width="6.53" height="6.60" fill="#376fb9"/><rect x="25.12" y="5.10" width="6.53" height="6.60" fill="#3973bd"/><rect x="30.15" y="5.10" width="6.53" height="6.60" fill="#3b75be"/><rect x="35.18" y="5.10" width="6.53" height="6.60" fill="#3d77bf"/><rect x="40.20" y="5.10" width="6.53" height="6.60" fill="#3e79c0"/><rect x="45.23" y="5.10" width="6.53" height="6.60" fill="#407bc1"/><rect x="50.25" y="5.10" width="6.53" height="6.60" fill="#417dc2"/><rect x="55.28" y="5.10" width="6.53" height="6.60" fill="#427ec3"/><rect x="60.30" y="5.10" width="6.53" height="6.60" fill="#417ec3"/><rect x="65.33" y="5.10" width="6.53" height="6.60" fill="#417dc3"/><rect x="70.35" y="5.10" width="6.53" height="6.60" fill="#407cc3"/><rect x="75.38" y="5.10" width="6.53" height="6.60" fill="#3f7cc3"/><rect x="80.40" y="5.10" width="6.53" height="6.60" fill="#3e7bc2"/><rect x="85.43" y="5.10" width="6.53" height="6.60" fill="#3d7ac2"/><rect x="90.45" y="5.10" width="6.53" height="6.60" fill="#3c79c1"/><rect x="95.48" y="5.10" width="6.53" height="6.60" fill="#3b78c0"/><rect x="100.50" y="5.10" width="6.53" height="6.60" fill="#3a76c0"/><rect x="105.53" y="5.10" width="6.53" height="6.60" fill="#3975bf"/><rect x="110.55" y="5.10" width="6.53" height="6.60" fill="#3874be"/><rect x="115.58" y="5.10" width="6.53" height="6.60" fill="#3975bf"/><rect x="120.60" y="5.10" width="6.53" height="6.60" fill="#3a77c0"/><rect x="125.63" y="5.10" width="6.53" height="6.60" fill="#3c7ac2"/><rect x="130.65" y="5.10" width="6.53" height="6.60" fill="#3e7cc4"/><rect x="135.68" y="5.10" width="6.53" height="6.60" fill="#3f7ec5"/><rect x="140.70" y="5.10" width="6.53" height="6.60" fill="#4181c7"/><rect x="145.73" y="5.10" width="6.53" height="6.60" fill="#4281c7"/><rect x="150.75" y="5.10" width="6.53" height="6.60" fill="#4282c8"/><rect x="155.78" y="5.10" width="6.53" height="6.60" fill="#4383c8"/><rect x="160.80" y="5.10" width="6.53" height="6.60" fill="#4383c9"/><rect x="165.83" y="5.10" width="6.53" height="6.60" fill="#4484c9"/><rect x="170.85" y="5.10" width="6.53" height="6.60" fill="#4484ca"/><rect x="175.88" y="5.10" width="6.53" height="6.60" fill="#4383c9"/><rect x="180.90" y="5.10" width="6.53" height="6.60" fill="#4181c8"/><rect x="185.93" y="5.10" width="6.53" height="6.60" fill="#4080c7"/><rect x="190.95" y="5.10" width="6.53" height="6.60" fill="#3e7fc6"/><rect x="195.98" y="5.10" width="26.52" height="6.60" fill="#3d7dc5"/><rect x="-20.00" y="10.21" width="26.52" height="6.60" fill="#2b5bab"/><rect x="5.03" y="10.21" width="6.53" height="6.60" fill="#2e60af"/><rect x="10.05" y="10.21" width="6.53" height="6.60" fill="#3165b2"/><rect x="15.08" y="10.21" width="6.53" height="6.60" fill="#3369b5"/><rect x="20.10" y="10.21" width="6.53" height="6.60" fill="#366eb9"/><rect x="25.12" y="10.21" width="6.53" height="6.60" fill="#3973bc"/><rect x="30.15" y="10.21" width="6.53" height="6.60" fill="#3c76be"/><rect x="35.18" y="10.21" width="6.53" height="6.60" fill="#3e78bf"/><rect x="40.20" y="10.21" width="6.53" height="6.60" fill="#407bc1"/><rect x="45.23" y="10.21" width="6.53" height="6.60" fill="#427dc2"/><rect x="50.25" y="10.21" width="6.53" height="6.60" fill="#447fc3"/><rect x="55.28" y="10.21" width="6.53" height="6.60" fill="#4581c4"/><rect x="60.30" y="10.21" width="6.53" height="6.60" fill="#4481c4"/><rect x="65.33" y="10.21" width="6.53" height="6.60" fill="#4380c4"/><rect x="70.35" y="10.21" width="6.53" height="6.60" fill="#427fc4"/><rect x="75.38" y="10.21" width="6.53" height="6.60" fill="#417fc4"/><rect x="80.40" y="10.21" width="6.53" height="6.60" fill="#407ec4"/><rect x="85.43" y="10.21" width="6.53" height="6.60" fill="#3f7dc3"/><rect x="90.45" y="10.21" width="6.53" height="6.60" fill="#3d7bc2"/><rect x="95.48" y="10.21" width="6.53" height="6.60" fill="#3c7ac1"/><rect x="100.50" y="10.21" width="6.53" height="6.60" fill="#3b78c1"/><rect x="105.53" y="10.21" width="6.53" height="6.60" fill="#3a77c0"/><rect x="110.55" y="10.21" width="6.53" height="6.60" fill="#3975bf"/><rect x="115.58" y="10.21" width="6.53" height="6.60" fill="#3a76bf"/><rect x="120.60" y="10.21" width="6.53" height="6.60" fill="#3c79c1"/><rect x="125.63" y="10.21" width="6.53" height="6.60" fill="#3e7cc3"/><rect x="130.65" y="10.21" width="6.53" height="6.60" fill="#407fc5"/><rect x="135.68" y="10.21" width="6.53" height="6.60" fill="#4282c7"/><rect x="140.70" y="10.21" width="6.53" height="6.60" fill="#4585c9"/><rect x="145.73" y="10.21" width="6.53" height="6.60" fill="#4585c9"/><rect x="150.75" y="10.21" width="6.53" height="6.60" fill="#4485c9"/><rect x="155.78" y="10.21" width="6.53" height="6.60" fill="#4484c9"/><rect x="160.80" y="10.21" width="6.53" height="6.60" fill="#4484c9"/><rect x="165.83" y="10.21" width="6.53" height="6.60" fill="#4484c9"/><rect x="170.85" y="10.21" width="6.53" height="6.60" fill="#4383c9"/><rect x="175.88" y="10.21" width="6.53" height="6.60" fill="#4282c8"/><rect x="180.90" y="10.21" width="6.53" height="6.60" fill="#4080c7"/><rect x="185.93" y="10.21" width="6.53" height="6.60" fill="#3f7fc6"/><rect x="190.95" y="10.21" width="6.53" height="6.60" fill="#3d7ec5"/><rect x="195.98" y="10.21" width="26.52" height="6.60" fill="#3c7cc5"/><rect x="-20.00" y="15.31" width="26.52" height="6.60" fill="#2a5aaa"/><rect x="5.03" y="15.31" width="6.53" height="6.60" fill="#2d5fae"/><rect x="10.05" y="15.31" width="6.53" height="6.60" fill="#3064b1"/><rect x="15.08" y="15.31" width="6.53" height="6.60" fill="#3369b5"/><rect x="20.10" y="15.31" width="6.53" height="6.60" fill="#366eb8"/><rect x="25.12" y="15.31" width="6.53" height="6.60" fill="#3973bc"/><rect x="30.15" y="15.31" width="6.53" height="6.60" fill="#3c76be"/><rect x="35.18" y="15.31" width="6.53" height="6.60" fill="#3f79bf"/><rect x="40.20" y="15.31" width="6.53" height="6.60" fill="#417cc1"/><rect x="45.23" y="15.31" width="6.53" height="6.60" fill="#447fc2"/><rect x="50.25" y="15.31" width="6.53" height="6.60" fill="#4682c4"/><rect x="55.28" y="15.31" width="6.53" height="6.60" fill="#4884c5"/><rect x="60.30" y="15.31" width="6.53" height="6.60" fill="#4784c5"/><rect x="65.33" y="15.31" width="6.53" height="6.60" fill="#4683c5"/><rect x="70.35" y="15.31" width="6.53" height="6.60" fill="#4482c5"/><rect x="75.38" y="15.31" width="6.53" height="6.60" fill="#4382c5"/><rect x="80.40" y="15.31" width="6.53" height="6.60" fill="#4281c5"/><rect x="85.43" y="15.31" width="6.53" height="6.60" fill="#4180c5"/><rect x="90.45" y="15.31" width="6.53" height="6.60" fill="#3f7ec4"/><rect x="95.48" y="15.31" width="6.53" height="6.60" fill="#3e7cc3"/><rect x="100.50" y="15.31" width="6.53" height="6.60" fill="#3d7ac1"/><rect x="105.53" y="15.31" width="6.53" height="6.60" fill="#3b78c0"/><rect x="110.55" y="15.31" width="6.53" height="6.60" fill="#3a76bf"/><rect x="115.58" y="15.31" width="6.53" height="6.60" fill="#3b78c0"/><rect x="120.60" y="15.31" width="6.53" height="6.60" fill="#3e7bc2"/><rect x="125.63" y="15.31" width="6.53" height="6.60" fill="#407fc4"/><rect x="130.65" y="15.31" width="6.53" height="6.60" fill="#4382c7"/><rect x="135.68" y="15.31" width="6.53" height="6.60" fill="#4586c9"/><rect x="140.70" y="15.31" width="6.53" height="6.60" fill="#4889cb"/><rect x="145.73" y="15.31" width="6.53" height="6.60" fill="#4789cb"/><rect x="150.75" y="15.31" width="6.53" height="6.60" fill="#4687ca"/><rect x="155.78" y="15.31" width="6.53" height="6.60" fill="#4586ca"/><rect x="160.80" y="15.31" width="6.53" height="6.60" fill="#4485c9"/><rect x="165.83" y="15.31" width="6.53" height="6.60" fill="#4383c9"/><rect x="170.85" y="15.31" width="6.53" height="6.60" fill="#4282c8"/><rect x="175.88" y="15.31" width="6.53" height="6.60" fill="#4181c7"/><rect x="180.90" y="15.31" width="6.53" height="6.60" fill="#3f7fc6"/><rect x="185.93" y="15.31" width="6.53" height="6.60" fill="#3e7ec6"/><rect x="190.95" y="15.31" width="6.53" height="6.60" fill="#3d7dc5"/><rect x="195.98" y="15.31" width="26.52" height="6.60" fill="#3b7bc4"/><rect x="-20.00" y="20.42" width="26.52" height="6.60" fill="#2959a9"/><rect x="5.03" y="20.42" width="6.53" height="6.60" fill="#2c5dac"/><rect x="10.05" y="20.42" width="6.53" height="6.60" fill="#2f62af"/><rect x="15.08" y="20.42" width="6.53" height="6.60" fill="#3267b3"/><rect x="20.10" y="20.42" width="6.53" height="6.60" fill="#356cb6"/><rect x="25.12" y="20.42" width="6.53" height="6.60" fill="#3871ba"/><rect x="30.15" y="20.42" width="6.53" height="6.60" fill="#3b75bc"/><rect x="35.18" y="20.42" width="6.53" height="6.60" fill="#3e78be"/><rect x="40.20" y="20.42" width="6.53" height="6.60" fill="#417bc0"/><rect x="45.23" y="20.42" width="6.53" height="6.60" fill="#447fc2"/><rect x="50.25" y="20.42" width="6.53" height="6.60" fill="#4782c4"/><rect x="55.28" y="20.42" width="6.53" height="6.60" fill="#4985c6"/><rect x="60.30" y="20.42" width="6.53" height="6.60" fill="#4885c6"/><rect x="65.33" y="20.42" width="6.53" height="6.60" fill="#4784c6"/><rect x="70.35" y="20.42" width="6.53" height="6.60" fill="#4684c6"/><rect x="75.38" y="20.42" width="6.53" height="6.60" fill="#4483c6"/><rect x="80.40" y="20.42" width="6.53" height="6.60" fill="#4383c6"/><rect x="85.43" y="20.42" width="6.53" height="6.60" fill="#4282c6"/><rect x="90.45" y="20.42" width="6.53" height="6.60" fill="#4180c5"/><rect x="95.48" y="20.42" width="6.53" height="6.60" fill="#407ec4"/><rect x="100.50" y="20.42" width="6.53" height="6.60" fill="#3e7cc3"/><rect x="105.53" y="20.42" width="6.53" height="6.60" fill="#3d7bc2"/><rect x="110.55" y="20.42" width="6.53" height="6.60" fill="#3c79c1"/><rect x="115.58" y="20.42" width="6.53" height="6.60" fill="#3d7ac2"/><rect x="120.60" y="20.42" width="6.53" height="6.60" fill="#407ec4"/><rect x="125.63" y="20.42" width="6.53" height="6.60" fill="#4281c5"/><rect x="130.65" y="20.42" width="6.53" height="6.60" fill="#4484c7"/><rect x="135.68" y="20.42" width="6.53" height="6.60" fill="#4787c9"/><rect x="140.70" y="20.42" width="6.53" height="6.60" fill="#498bcb"/><rect x="145.73" y="20.42" width="6.53" height="6.60" fill="#4889cb"/><rect x="150.75" y="20.42" width="6.53" height="6.60" fill="#4687ca"/><rect x="155.78" y="20.42" width="6.53" height="6.60" fill="#4586c9"/><rect x="160.80" y="20.42" width="6.53" height="6.60" fill="#4384c8"/><rect x="165.83" y="20.42" width="6.53" height="6.60" fill="#4282c8"/><rect x="170.85" y="20.42" width="6.53" height="6.60" fill="#4080c7"/><rect x="175.88" y="20.42" width="6.53" height="6.60" fill="#3f7fc6"/><rect x="180.90" y="20.42" width="6.53" height="6.60" fill="#3e7ec5"/><rect x="185.93" y="20.42" width="6.53" height="6.60" fill="#3d7dc4"/><rect x="190.95" y="20.42" width="6.53" height="6.60" fill="#3b7bc4"/><rect x="195.98" y="20.42" width="26.52" height="6.60" fill="#3a7ac3"/><rect x="-20.00" y="25.52" width="26.52" height="6.60" fill="#2857a6"/><rect x="5.03" y="25.52" width="6.53" height="6.60" fill="#2a5baa"/><rect x="10.05" y="25.52" width="6.53" height="6.60" fill="#2d60ad"/><rect x="15.08" y="25.52" width="6.53" height="6.60" fill="#3064b0"/><rect x="20.10" y="25.52" width="6.53" height="6.60" fill="#3369b3"/><rect x="25.12" y="25.52" width="6.53" height="6.60" fill="#356db7"/><rect x="30.15" y="25.52" width="6.53" height="6.60" fill="#3871b9"/><rect x="35.18" y="25.52" width="6.53" height="6.60" fill="#3b75bc"/><rect x="40.20" y="25.52" width="6.53" height="6.60" fill="#3f79be"/><rect x="45.23" y="25.52" width="6.53" height="6.60" fill="#427cc0"/><rect x="50.25" y="25.52" width="6.53" height="6.60" fill="#4580c2"/><rect x="55.28" y="25.52" width="6.53" height="6.60" fill="#4884c5"/><rect x="60.30" y="25.52" width="6.53" height="6.60" fill="#4784c5"/><rect x="65.33" y="25.52" width="6.53" height="6.60" fill="#4684c5"/><rect x="70.35" y="25.52" width="6.53" height="6.60" fill="#4583c6"/><rect x="75.38" y="25.52" width="6.53" height="6.60" fill="#4483c6"/><rect x="80.40" y="25.52" width="6.53" height="6.60" fill="#4483c6"/><rect x="85.43" y="25.52" width="6.53" height="6.60" fill="#4383c7"/><rect x="90.45" y="25.52" width="6.53" height="6.60" fill="#4282c6"/><rect x="95.48" y="25.52" width="6.53" height="6.60" fill="#4280c5"/><rect x="100.50" y="25.52" width="6.53" height="6.60" fill="#417fc5"/><rect x="105.53" y="25.52" width="6.53" height="6.60" fill="#407ec4"/><rect x="110.55" y="25.52" width="6.53" height="6.60" fill="#3f7dc3"/><rect x="115.58" y="25.52" width="6.53" height="6.60" fill="#407ec4"/><rect x="120.60" y="25.52" width="6.53" height="6.60" fill="#4180c5"/><rect x="125.63" y="25.52" width="6.53" height="6.60" fill="#4382c6"/><rect x="130.65" y="25.52" width="6.53" height="6.60" fill="#4484c7"/><rect x="135.68" y="25.52" width="6.53" height="6.60" fill="#4686c9"/><rect x="140.70" y="25.52" width="6.53" height="6.60" fill="#4788ca"/><rect x="145.73" y="25.52" width="6.53" height="6.60" fill="#4687c9"/><rect x="150.75" y="25.52" width="6.53" height="6.60" fill="#4485c8"/><rect x="155.78" y="25.52" width="6.53" height="6.60" fill="#4383c7"/><rect x="160.80" y="25.52" width="6.53" height="6.60" fill="#4181c6"/><rect x="165.83" y="25.52" width="6.53" height="6.60" fill="#3f80c6"/><rect x="170.85" y="25.52" width="6.53" height="6.60" fill="#3e7ec5"/><rect x="175.88" y="25.52" width="6.53" height="6.60" fill="#3d7dc4"/><rect x="180.90" y="25.52" width="6.53" height="6.60" fill="#3c7cc4"/><rect x="185.93" y="25.52" width="6.53" height="6.60" fill="#3b7bc3"/><rect x="190.95" y="25.52" width="6.53" height="6.60" fill="#3a7ac2"/><rect x="195.98" y="25.52" width="26.52" height="6.60" fill="#3979c2"/><rect x="-20.00" y="30.62" width="26.52" height="6.60" fill="#2655a4"/><rect x="5.03" y="30.62" width="6.53" height="6.60" fill="#2959a7"/><rect x="10.05" y="30.62" width="6.53" height="6.60" fill="#2b5daa"/><rect x="15.08" y="30.62" width="6.53" height="6.60" fill="#2e61ad"/><rect x="20.10" y="30.62" width="6.53" height="6.60" fill="#3065b1"/><rect x="25.12" y="30.62" width="6.53" height="6.60" fill="#3369b4"/><rect x="30.15" y="30.62" width="6.53" height="6.60" fill="#366db7"/><rect x="35.18" y="30.62" width="6.53" height="6.60" fill="#3972b9"/><rect x="40.20" y="30.62" width="6.53" height="6.60" fill="#3c76bc"/><rect x="45.23" y="30.62" width="6.53" height="6.60" fill="#407abe"/><rect x="50.25" y="30.62" width="6.53" height="6.60" fill="#437ec1"/><rect x="55.28" y="30.62" width="6.53" height="6.60" fill="#4682c4"/><rect x="60.30" y="30.62" width="6.53" height="6.60" fill="#4683c4"/><rect x="65.33" y="30.62" width="6.53" height="6.60" fill="#4583c5"/><rect x="70.35" y="30.62" width="6.53" height="6.60" fill="#4583c6"/><rect x="75.38" y="30.62" width="6.53" height="6.60" fill="#4583c6"/><rect x="80.40" y="30.62" width="6.53" height="6.60" fill="#4484c7"/><rect x="85.43" y="30.62" width="6.53" height="6.60" fill="#4484c7"/><rect x="90.45" y="30.62" width="6.53" height="6.60" fill="#4483c7"/><rect x="95.48" y="30.62" width="6.53" height="6.60" fill="#4383c7"/><rect x="100.50" y="30.62" width="6.53" height="6.60" fill="#4382c6"/><rect x="105.53" y="30.62" width="6.53" height="6.60" fill="#4382c6"/><rect x="110.55" y="30.62" width="6.53" height="6.60" fill="#4381c6"/><rect x="115.58" y="30.62" width="6.53" height="6.60" fill="#4382c6"/><rect x="120.60" y="30.62" width="6.53" height="6.60" fill="#4383c7"/><rect x="125.63" y="30.62" width="6.53" height="6.60" fill="#4483c7"/><rect x="130.65" y="30.62" width="6.53" height="6.60" fill="#4484c7"/><rect x="135.68" y="30.62" width="6.53" height="6.60" fill="#4585c8"/><rect x="140.70" y="30.62" width="6.53" height="6.60" fill="#4586c8"/><rect x="145.73" y="30.62" width="6.53" height="6.60" fill="#4384c7"/><rect x="150.75" y="30.62" width="6.53" height="6.60" fill="#4282c6"/><rect x="155.78" y="30.62" width="6.53" height="6.60" fill="#4081c6"/><rect x="160.80" y="30.62" width="6.53" height="6.60" fill="#3f7fc5"/><rect x="165.83" y="30.62" width="6.53" height="6.60" fill="#3d7dc4"/><rect x="170.85" y="30.62" width="6.53" height="6.60" fill="#3c7cc3"/><rect x="175.88" y="30.62" width="6.53" height="6.60" fill="#3b7bc2"/><rect x="180.90" y="30.62" width="6.53" height="6.60" fill="#3a7ac2"/><rect x="185.93" y="30.62" width="6.53" height="6.60" fill="#3979c2"/><rect x="190.95" y="30.62" width="6.53" height="6.60" fill="#3979c1"/><rect x="195.98" y="30.62" width="26.52" height="6.60" fill="#3878c1"/><rect x="-20.00" y="35.73" width="26.52" height="6.60" fill="#2553a2"/><rect x="5.03" y="35.73" width="6.53" height="6.60" fill="#2756a5"/><rect x="10.05" y="35.73" width="6.53" height="6.60" fill="#295aa8"/><rect x="15.08" y="35.73" width="6.53" height="6.60" fill="#2b5eab"/><rect x="20.10" y="35.73" width="6.53" height="6.60" fill="#2e62ae"/><rect x="25.12" y="35.73" width="6.53" height="6.60" fill="#3065b1"/><rect x="30.15" y="35.73" width="6.53" height="6.60" fill="#336ab4"/><rect x="35.18" y="35.73" width="6.53" height="6.60" fill="#376eb7"/><rect x="40.20" y="35.73" width="6.53" height="6.60" fill="#3a73ba"/><rect x="45.23" y="35.73" width="6.53" height="6.60" fill="#3e78bd"/><rect x="50.25" y="35.73" width="6.53" height="6.60" fill="#417cc0"/><rect x="55.28" y="35.73" width="6.53" height="6.60" fill="#4581c3"/><rect x="60.30" y="35.73" width="6.53" height="6.60" fill="#4581c3"/><rect x="65.33" y="35.73" width="6.53" height="6.60" fill="#4582c4"/><rect x="70.35" y="35.73" width="6.53" height="6.60" fill="#4583c5"/><rect x="75.38" y="35.73" width="6.53" height="6.60" fill="#4584c6"/><rect x="80.40" y="35.73" width="6.53" height="6.60" fill="#4584c7"/><rect x="85.43" y="35.73" width="6.53" height="6.60" fill="#4585c8"/><rect x="90.45" y="35.73" width="6.53" height="6.60" fill="#4585c8"/><rect x="95.48" y="35.73" width="6.53" height="6.60" fill="#4585c8"/><rect x="100.50" y="35.73" width="6.53" height="6.60" fill="#4685c8"/><rect x="105.53" y="35.73" width="6.53" height="6.60" fill="#4685c8"/><rect x="110.55" y="35.73" width="6.53" height="6.60" fill="#4686c9"/><rect x="115.58" y="35.73" width="6.53" height="6.60" fill="#4685c8"/><rect x="120.60" y="35.73" width="6.53" height="6.60" fill="#4585c8"/><rect x="125.63" y="35.73" width="6.53" height="6.60" fill="#4585c8"/><rect x="130.65" y="35.73" width="6.53" height="6.60" fill="#4484c7"/><rect x="135.68" y="35.73" width="6.53" height="6.60" fill="#4484c7"/><rect x="140.70" y="35.73" width="6.53" height="6.60" fill="#4383c7"/><rect x="145.73" y="35.73" width="6.53" height="6.60" fill="#4182c6"/><rect x="150.75" y="35.73" width="6.53" height="6.60" fill="#4080c5"/><rect x="155.78" y="35.73" width="6.53" height="6.60" fill="#3e7ec4"/><rect x="160.80" y="35.73" width="6.53" height="6.60" fill="#3c7cc3"/><rect x="165.83" y="35.73" width="6.53" height="6.60" fill="#3b7bc2"/><rect x="170.85" y="35.73" width="6.53" height="6.60" fill="#3979c1"/><rect x="175.88" y="35.73" width="6.53" height="6.60" fill="#3979c1"/><rect x="180.90" y="35.73" width="6.53" height="6.60" fill="#3878c0"/><rect x="185.93" y="35.73" width="6.53" height="6.60" fill="#3878c0"/><rect x="190.95" y="35.73" width="6.53" height="6.60" fill="#3777c0"/><rect x="195.98" y="35.73" width="26.52" height="6.60" fill="#3777c0"/><rect x="-20.00" y="40.83" width="26.52" height="6.60" fill="#23509f"/><rect x="5.03" y="40.83" width="6.53" height="6.60" fill="#2553a1"/><rect x="10.05" y="40.83" width="6.53" height="6.60" fill="#2756a4"/><rect x="15.08" y="40.83" width="6.53" height="6.60" fill="#295aa7"/><rect x="20.10" y="40.83" width="6.53" height="6.60" fill="#2b5daa"/><rect x="25.12" y="40.83" width="6.53" height="6.60" fill="#2d60ac"/><rect x="30.15" y="40.83" width="6.53" height="6.60" fill="#3065b0"/><rect x="35.18" y="40.83" width="6.53" height="6.60" fill="#346bb3"/><rect x="40.20" y="40.83" width="6.53" height="6.60" fill="#3970b7"/><rect x="45.23" y="40.83" width="6.53" height="6.60" fill="#3d75bb"/><rect x="50.25" y="40.83" width="6.53" height="6.60" fill="#417bbe"/><rect x="55.28" y="40.83" width="6.53" height="6.60" fill="#4580c2"/><rect x="60.30" y="40.83" width="6.53" height="6.60" fill="#4581c3"/><rect x="65.33" y="40.83" width="6.53" height="6.60" fill="#4481c3"/><rect x="70.35" y="40.83" width="6.53" height="6.60" fill="#4482c4"/><rect x="75.38" y="40.83" width="6.53" height="6.60" fill="#4482c5"/><rect x="80.40" y="40.83" width="6.53" height="6.60" fill="#4483c6"/><rect x="85.43" y="40.83" width="6.53" height="6.60" fill="#4483c7"/><rect x="90.45" y="40.83" width="6.53" height="6.60" fill="#4483c7"/><rect x="95.48" y="40.83" width="6.53" height="6.60" fill="#4484c7"/><rect x="100.50" y="40.83" width="6.53" height="6.60" fill="#4584c7"/><rect x="105.53" y="40.83" width="6.53" height="6.60" fill="#4585c8"/><rect x="110.55" y="40.83" width="6.53" height="6.60" fill="#4685c8"/><rect x="115.58" y="40.83" width="6.53" height="6.60" fill="#4585c7"/><rect x="120.60" y="40.83" width="6.53" height="6.60" fill="#4483c7"/><rect x="125.63" y="40.83" width="6.53" height="6.60" fill="#4382c6"/><rect x="130.65" y="40.83" width="6.53" height="6.60" fill="#4281c5"/><rect x="135.68" y="40.83" width="6.53" height="6.60" fill="#4180c4"/><rect x="140.70" y="40.83" width="6.53" height="6.60" fill="#407fc4"/><rect x="145.73" y="40.83" width="6.53" height="6.60" fill="#3e7dc3"/><rect x="150.75" y="40.83" width="6.53" height="6.60" fill="#3d7cc2"/><rect x="155.78" y="40.83" width="6.53" height="6.60" fill="#3b7ac1"/><rect x="160.80" y="40.83" width="6.53" height="6.60" fill="#3979c0"/><rect x="165.83" y="40.83" width="6.53" height="6.60" fill="#3877bf"/><rect x="170.85" y="40.83" width="6.53" height="6.60" fill="#3776be"/><rect x="175.88" y="40.83" width="6.53" height="6.60" fill="#3676be"/><rect x="180.90" y="40.83" width="6.53" height="6.60" fill="#3676be"/><rect x="185.93" y="40.83" width="6.53" height="6.60" fill="#3676be"/><rect x="190.95" y="40.83" width="6.53" height="6.60" fill="#3675be"/><rect x="195.98" y="40.83" width="26.52" height="6.60" fill="#3575be"/><rect x="-20.00" y="45.94" width="26.52" height="6.60" fill="#214c9b"/><rect x="5.03" y="45.94" width="6.53" height="6.60" fill="#224f9d"/><rect x="10.05" y="45.94" width="6.53" height="6.60" fill="#24529f"/><rect x="15.08" y="45.94" width="6.53" height="6.60" fill="#2654a2"/><rect x="20.10" y="45.94" width="6.53" height="6.60" fill="#2757a4"/><rect x="25.12" y="45.94" width="6.53" height="6.60" fill="#295aa6"/><rect x="30.15" y="45.94" width="6.53" height="6.60" fill="#2d5fab"/><rect x="35.18" y="45.94" width="6.53" height="6.60" fill="#3266af"/><rect x="40.20" y="45.94" width="6.53" height="6.60" fill="#376db4"/><rect x="45.23" y="45.94" width="6.53" height="6.60" fill="#3c73b8"/><rect x="50.25" y="45.94" width="6.53" height="6.60" fill="#417abd"/><rect x="55.28" y="45.94" width="6.53" height="6.60" fill="#4680c1"/><rect x="60.30" y="45.94" width="6.53" height="6.60" fill="#4580c2"/><rect x="65.33" y="45.94" width="6.53" height="6.60" fill="#4480c2"/><rect x="70.35" y="45.94" width="6.53" height="6.60" fill="#437fc2"/><rect x="75.38" y="45.94" width="6.53" height="6.60" fill="#427fc3"/><rect x="80.40" y="45.94" width="6.53" height="6.60" fill="#417fc3"/><rect x="85.43" y="45.94" width="6.53" height="6.60" fill="#417fc4"/><rect x="90.45" y="45.94" width="6.53" height="6.60" fill="#417fc4"/><rect x="95.48" y="45.94" width="6.53" height="6.60" fill="#417fc4"/><rect x="100.50" y="45.94" width="6.53" height="6.60" fill="#417fc4"/><rect x="105.53" y="45.94" width="6.53" height="6.60" fill="#417fc4"/><rect x="110.55" y="45.94" width="6.53" height="6.60" fill="#4180c4"/><rect x="115.58" y="45.94" width="6.53" height="6.60" fill="#407fc3"/><rect x="120.60" y="45.94" width="6.53" height="6.60" fill="#3f7ec2"/><rect x="125.63" y="45.94" width="6.53" height="6.60" fill="#3e7cc1"/><rect x="130.65" y="45.94" width="6.53" height="6.60" fill="#3d7bc0"/><rect x="135.68" y="45.94" width="6.53" height="6.60" fill="#3c7abf"/><rect x="140.70" y="45.94" width="6.53" height="6.60" fill="#3b78bf"/><rect x="145.73" y="45.94" width="6.53" height="6.60" fill="#3977be"/><rect x="150.75" y="45.94" width="6.53" height="6.60" fill="#3876bd"/><rect x="155.78" y="45.94" width="6.53" height="6.60" fill="#3775bd"/><rect x="160.80" y="45.94" width="6.53" height="6.60" fill="#3674bc"/><rect x="165.83" y="45.94" width="6.53" height="6.60" fill="#3573bb"/><rect x="170.85" y="45.94" width="6.53" height="6.60" fill="#3472bb"/><rect x="175.88" y="45.94" width="6.53" height="6.60" fill="#3472bb"/><rect x="180.90" y="45.94" width="6.53" height="6.60" fill="#3473bb"/><rect x="185.93" y="45.94" width="6.53" height="6.60" fill="#3473bc"/><rect x="190.95" y="45.94" width="6.53" height="6.60" fill="#3473bc"/><rect x="195.98" y="45.94" width="26.52" height="6.60" fill="#3474bc"/><rect x="-20.00" y="51.04" width="26.52" height="6.60" fill="#1f4897"/><rect x="5.03" y="51.04" width="6.53" height="6.60" fill="#204b99"/><rect x="10.05" y="51.04" width="6.53" height="6.60" fill="#214d9b"/><rect x="15.08" y="51.04" width="6.53" height="6.60" fill="#224f9d"/><rect x="20.10" y="51.04" width="6.53" height="6.60" fill="#24519f"/><rect x="25.12" y="51.04" width="6.53" height="6.60" fill="#2553a1"/><rect x="30.15" y="51.04" width="6.53" height="6.60" fill="#2a5aa5"/><rect x="35.18" y="51.04" width="6.53" height="6.60" fill="#3062ab"/><rect x="40.20" y="51.04" width="6.53" height="6.60" fill="#3669b0"/><rect x="45.23" y="51.04" width="6.53" height="6.60" fill="#3c71b6"/><rect x="50.25" y="51.04" width="6.53" height="6.60" fill="#4279bc"/><rect x="55.28" y="51.04" width="6.53" height="6.60" fill="#4880c1"/><rect x="60.30" y="51.04" width="6.53" height="6.60" fill="#467fc1"/><rect x="65.33" y="51.04" width="6.53" height="6.60" fill="#447ec1"/><rect x="70.35" y="51.04" width="6.53" height="6.60" fill="#437dc1"/><rect x="75.38" y="51.04" width="6.53" height="6.60" fill="#417cc1"/><rect x="80.40" y="51.04" width="6.53" height="6.60" fill="#3f7bc1"/><rect x="85.43" y="51.04" width="6.53" height="6.60" fill="#3e7ac0"/><rect x="90.45" y="51.04" width="6.53" height="6.60" fill="#3e7ac0"/><rect x="95.48" y="51.04" width="6.53" height="6.60" fill="#3d7ac0"/><rect x="100.50" y="51.04" width="6.53" height="6.60" fill="#3d7ac0"/><rect x="105.53" y="51.04" width="6.53" height="6.60" fill="#3d7ac0"/><rect x="110.55" y="51.04" width="6.53" height="6.60" fill="#3c7abf"/><rect x="115.58" y="51.04" width="6.53" height="6.60" fill="#3b79bf"/><rect x="120.60" y="51.04" width="6.53" height="6.60" fill="#3a78be"/><rect x="125.63" y="51.04" width="6.53" height="6.60" fill="#3976bd"/><rect x="130.65" y="51.04" width="6.53" height="6.60" fill="#3875bc"/><rect x="135.68" y="51.04" width="6.53" height="6.60" fill="#3773bb"/><rect x="140.70" y="51.04" width="6.53" height="6.60" fill="#3672ba"/><rect x="145.73" y="51.04" width="6.53" height="6.60" fill="#3571b9"/><rect x="150.75" y="51.04" width="6.53" height="6.60" fill="#3470b9"/><rect x="155.78" y="51.04" width="6.53" height="6.60" fill="#3470b8"/><rect x="160.80" y="51.04" width="6.53" height="6.60" fill="#336fb8"/><rect x="165.83" y="51.04" width="6.53" height="6.60" fill="#326fb8"/><rect x="170.85" y="51.04" width="6.53" height="6.60" fill="#326eb7"/><rect x="175.88" y="51.04" width="6.53" height="6.60" fill="#326fb8"/><rect x="180.90" y="51.04" width="6.53" height="6.60" fill="#3270b9"/><rect x="185.93" y="51.04" width="6.53" height="6.60" fill="#3270b9"/><rect x="190.95" y="51.04" width="6.53" height="6.60" fill="#3271ba"/><rect x="195.98" y="51.04" width="26.52" height="6.60" fill="#3272ba"/><rect x="-20.00" y="56.15" width="26.52" height="6.60" fill="#1c4593"/><rect x="5.03" y="56.15" width="6.53" height="6.60" fill="#1d4694"/><rect x="10.05" y="56.15" width="6.53" height="6.60" fill="#1e4896"/><rect x="15.08" y="56.15" width="6.53" height="6.60" fill="#1f4a97"/><rect x="20.10" y="56.15" width="6.53" height="6.60" fill="#204b99"/><rect x="25.12" y="56.15" width="6.53" height="6.60" fill="#214d9b"/><rect x="30.15" y="56.15" width="6.53" height="6.60" fill="#2754a0"/><rect x="35.18" y="56.15" width="6.53" height="6.60" fill="#2e5da7"/><rect x="40.20" y="56.15" width="6.53" height="6.60" fill="#3566ad"/><rect x="45.23" y="56.15" width="6.53" height="6.60" fill="#3c6fb4"/><rect x="50.25" y="56.15" width="6.53" height="6.60" fill="#4378ba"/><rect x="55.28" y="56.15" width="6.53" height="6.60" fill="#4980c0"/><rect x="60.30" y="56.15" width="6.53" height="6.60" fill="#477ec0"/><rect x="65.33" y="56.15" width="6.53" height="6.60" fill="#447cbf"/><rect x="70.35" y="56.15" width="6.53" height="6.60" fill="#427bbf"/><rect x="75.38" y="56.15" width="6.53" height="6.60" fill="#3f79be"/><rect x="80.40" y="56.15" width="6.53" height="6.60" fill="#3d77be"/><rect x="85.43" y="56.15" width="6.53" height="6.60" fill="#3b76bd"/><rect x="90.45" y="56.15" width="6.53" height="6.60" fill="#3a76bd"/><rect x="95.48" y="56.15" width="6.53" height="6.60" fill="#3a76bd"/><rect x="100.50" y="56.15" width="6.53" height="6.60" fill="#3975bc"/><rect x="105.53" y="56.15" width="6.53" height="6.60" fill="#3875bc"/><rect x="110.55" y="56.15" width="6.53" height="6.60" fill="#3875bb"/><rect x="115.58" y="56.15" width="6.53" height="6.60" fill="#3774ba"/><rect x="120.60" y="56.15" width="6.53" height="6.60" fill="#3572b9"/><rect x="125.63" y="56.15" width="6.53" height="6.60" fill="#3470b8"/><rect x="130.65" y="56.15" width="6.53" height="6.60" fill="#336fb7"/><rect x="135.68" y="56.15" width="6.53" height="6.60" fill="#326db6"/><rect x="140.70" y="56.15" width="6.53" height="6.60" fill="#316bb5"/><rect x="145.73" y="56.15" width="6.53" height="6.60" fill="#306bb4"/><rect x="150.75" y="56.15" width="6.53" height="6.60" fill="#306bb4"/><rect x="155.78" y="56.15" width="6.53" height="6.60" fill="#306bb4"/><rect x="160.80" y="56.15" width="6.53" height="6.60" fill="#306ab4"/><rect x="165.83" y="56.15" width="6.53" height="6.60" fill="#2f6ab4"/><rect x="170.85" y="56.15" width="6.53" height="6.60" fill="#2f6ab4"/><rect x="175.88" y="56.15" width="6.53" height="6.60" fill="#306bb5"/><rect x="180.90" y="56.15" width="6.53" height="6.60" fill="#306db6"/><rect x="185.93" y="56.15" width="6.53" height="6.60" fill="#306eb7"/><rect x="190.95" y="56.15" width="6.53" height="6.60" fill="#306fb8"/><rect x="195.98" y="56.15" width="26.52" height="6.60" fill="#3170b8"/><rect x="-20.00" y="61.25" width="26.52" height="6.60" fill="#1a408e"/><rect x="5.03" y="61.25" width="6.53" height="6.60" fill="#1b428f"/><rect x="10.05" y="61.25" width="6.53" height="6.60" fill="#1c4391"/><rect x="15.08" y="61.25" width="6.53" height="6.60" fill="#1c4492"/><rect x="20.10" y="61.25" width="6.53" height="6.60" fill="#1d4693"/><rect x="25.12" y="61.25" width="6.53" height="6.60" fill="#1e4795"/><rect x="30.15" y="61.25" width="6.53" height="6.60" fill="#234e9a"/><rect x="35.18" y="61.25" width="6.53" height="6.60" fill="#2a57a1"/><rect x="40.20" y="61.25" width="6.53" height="6.60" fill="#3160a7"/><rect x="45.23" y="61.25" width="6.53" height="6.60" fill="#3768ae"/><rect x="50.25" y="61.25" width="6.53" height="6.60" fill="#3e71b4"/><rect x="55.28" y="61.25" width="6.53" height="6.60" fill="#4479ba"/><rect x="60.30" y="61.25" width="6.53" height="6.60" fill="#4277ba"/><rect x="65.33" y="61.25" width="6.53" height="6.60" fill="#4076ba"/><rect x="70.35" y="61.25" width="6.53" height="6.60" fill="#3e75ba"/><rect x="75.38" y="61.25" width="6.53" height="6.60" fill="#3c73ba"/><rect x="80.40" y="61.25" width="6.53" height="6.60" fill="#3972ba"/><rect x="85.43" y="61.25" width="6.53" height="6.60" fill="#3871b9"/><rect x="90.45" y="61.25" width="6.53" height="6.60" fill="#3771b9"/><rect x="95.48" y="61.25" width="6.53" height="6.60" fill="#3671b8"/><rect x="100.50" y="61.25" width="6.53" height="6.60" fill="#3570b8"/><rect x="105.53" y="61.25" width="6.53" height="6.60" fill="#3470b7"/><rect x="110.55" y="61.25" width="6.53" height="6.60" fill="#3470b7"/><rect x="115.58" y="61.25" width="6.53" height="6.60" fill="#336eb6"/><rect x="120.60" y="61.25" width="6.53" height="6.60" fill="#316cb4"/><rect x="125.63" y="61.25" width="6.53" height="6.60" fill="#306ab3"/><rect x="130.65" y="61.25" width="6.53" height="6.60" fill="#2f68b1"/><rect x="135.68" y="61.25" width="6.53" height="6.60" fill="#2d66af"/><rect x="140.70" y="61.25" width="6.53" height="6.60" fill="#2c64ae"/><rect x="145.73" y="61.25" width="6.53" height="6.60" fill="#2c64ae"/><rect x="150.75" y="61.25" width="6.53" height="6.60" fill="#2c64ae"/><rect x="155.78" y="61.25" width="6.53" height="6.60" fill="#2c64ae"/><rect x="160.80" y="61.25" width="6.53" height="6.60" fill="#2c64ae"/><rect x="165.83" y="61.25" width="6.53" height="6.60" fill="#2c65ae"/><rect x="170.85" y="61.25" width="6.53" height="6.60" fill="#2c65af"/><rect x="175.88" y="61.25" width="6.53" height="6.60" fill="#2d67b0"/><rect x="180.90" y="61.25" width="6.53" height="6.60" fill="#2d68b1"/><rect x="185.93" y="61.25" width="6.53" height="6.60" fill="#2e6ab3"/><rect x="190.95" y="61.25" width="6.53" height="6.60" fill="#2e6bb4"/><rect x="195.98" y="61.25" width="26.52" height="6.60" fill="#2f6db5"/><rect x="-20.00" y="66.35" width="26.52" height="6.60" fill="#183c88"/><rect x="5.03" y="66.35" width="6.53" height="6.60" fill="#193d8a"/><rect x="10.05" y="66.35" width="6.53" height="6.60" fill="#193e8b"/><rect x="15.08" y="66.35" width="6.53" height="6.60" fill="#1a408c"/><rect x="20.10" y="66.35" width="6.53" height="6.60" fill="#1b418d"/><rect x="25.12" y="66.35" width="6.53" height="6.60" fill="#1b428f"/><rect x="30.15" y="66.35" width="6.53" height="6.60" fill="#1f4893"/><rect x="35.18" y="66.35" width="6.53" height="6.60" fill="#244f99"/><rect x="40.20" y="66.35" width="6.53" height="6.60" fill="#2a569e"/><rect x="45.23" y="66.35" width="6.53" height="6.60" fill="#2f5da4"/><rect x="50.25" y="66.35" width="6.53" height="6.60" fill="#3464a9"/><rect x="55.28" y="66.35" width="6.53" height="6.60" fill="#396aae"/><rect x="60.30" y="66.35" width="6.53" height="6.60" fill="#386baf"/><rect x="65.33" y="66.35" width="6.53" height="6.60" fill="#376bb0"/><rect x="70.35" y="66.35" width="6.53" height="6.60" fill="#366bb1"/><rect x="75.38" y="66.35" width="6.53" height="6.60" fill="#356bb3"/><rect x="80.40" y="66.35" width="6.53" height="6.60" fill="#356cb4"/><rect x="85.43" y="66.35" width="6.53" height="6.60" fill="#346cb4"/><rect x="90.45" y="66.35" width="6.53" height="6.60" fill="#336cb4"/><rect x="95.48" y="66.35" width="6.53" height="6.60" fill="#326cb4"/><rect x="100.50" y="66.35" width="6.53" height="6.60" fill="#326bb3"/><rect x="105.53" y="66.35" width="6.53" height="6.60" fill="#316bb3"/><rect x="110.55" y="66.35" width="6.53" height="6.60" fill="#306bb3"/><rect x="115.58" y="66.35" width="6.53" height="6.60" fill="#2f69b1"/><rect x="120.60" y="66.35" width="6.53" height="6.60" fill="#2e67af"/><rect x="125.63" y="66.35" width="6.53" height="6.60" fill="#2c64ac"/><rect x="130.65" y="66.35" width="6.53" height="6.60" fill="#2a61aa"/><rect x="135.68" y="66.35" width="6.53" height="6.60" fill="#295ea8"/><rect x="140.70" y="66.35" width="6.53" height="6.60" fill="#275ba5"/><rect x="145.73" y="66.35" width="6.53" height="6.60" fill="#275ca6"/><rect x="150.75" y="66.35" width="6.53" height="6.60" fill="#285ca6"/><rect x="155.78" y="66.35" width="6.53" height="6.60" fill="#285da6"/><rect x="160.80" y="66.35" width="6.53" height="6.60" fill="#285da7"/><rect x="165.83" y="66.35" width="6.53" height="6.60" fill="#285ea7"/><rect x="170.85" y="66.35" width="6.53" height="6.60" fill="#295ea8"/><rect x="175.88" y="66.35" width="6.53" height="6.60" fill="#2a60aa"/><rect x="180.90" y="66.35" width="6.53" height="6.60" fill="#2a62ac"/><rect x="185.93" y="66.35" width="6.53" height="6.60" fill="#2b64ad"/><rect x="190.95" y="66.35" width="6.53" height="6.60" fill="#2c66af"/><rect x="195.98" y="66.35" width="26.52" height="6.60" fill="#2d68b1"/><rect x="-20.00" y="71.46" width="26.52" height="6.60" fill="#163783"/><rect x="5.03" y="71.46" width="6.53" height="6.60" fill="#173984"/><rect x="10.05" y="71.46" width="6.53" height="6.60" fill="#173a85"/><rect x="15.08" y="71.46" width="6.53" height="6.60" fill="#183b86"/><rect x="20.10" y="71.46" width="6.53" height="6.60" fill="#183c88"/><rect x="25.12" y="71.46" width="6.53" height="6.60" fill="#193d89"/><rect x="30.15" y="71.46" width="6.53" height="6.60" fill="#1c428c"/><rect x="35.18" y="71.46" width="6.53" height="6.60" fill="#1f4791"/><rect x="40.20" y="71.46" width="6.53" height="6.60" fill="#234c95"/><rect x="45.23" y="71.46" width="6.53" height="6.60" fill="#26529a"/><rect x="50.25" y="71.46" width="6.53" height="6.60" fill="#2a579e"/><rect x="55.28" y="71.46" width="6.53" height="6.60" fill="#2d5ca2"/><rect x="60.30" y="71.46" width="6.53" height="6.60" fill="#2e5ea5"/><rect x="65.33" y="71.46" width="6.53" height="6.60" fill="#2e60a7"/><rect x="70.35" y="71.46" width="6.53" height="6.60" fill="#2f61a9"/><rect x="75.38" y="71.46" width="6.53" height="6.60" fill="#2f63ac"/><rect x="80.40" y="71.46" width="6.53" height="6.60" fill="#3065ae"/><rect x="85.43" y="71.46" width="6.53" height="6.60" fill="#3066af"/><rect x="90.45" y="71.46" width="6.53" height="6.60" fill="#2f66af"/><rect x="95.48" y="71.46" width="6.53" height="6.60" fill="#2f66af"/><rect x="100.50" y="71.46" width="6.53" height="6.60" fill="#2e67af"/><rect x="105.53" y="71.46" width="6.53" height="6.60" fill="#2e67af"/><rect x="110.55" y="71.46" width="6.53" height="6.60" fill="#2d67ae"/><rect x="115.58" y="71.46" width="6.53" height="6.60" fill="#2c65ac"/><rect x="120.60" y="71.46" width="6.53" height="6.60" fill="#2a61a9"/><rect x="125.63" y="71.46" width="6.53" height="6.60" fill="#285ea6"/><rect x="130.65" y="71.46" width="6.53" height="6.60" fill="#265aa3"/><rect x="135.68" y="71.46" width="6.53" height="6.60" fill="#2556a0"/><rect x="140.70" y="71.46" width="6.53" height="6.60" fill="#23539d"/><rect x="145.73" y="71.46" width="6.53" height="6.60" fill="#23539d"/><rect x="150.75" y="71.46" width="6.53" height="6.60" fill="#23549e"/><rect x="155.78" y="71.46" width="6.53" height="6.60" fill="#24559f"/><rect x="160.80" y="71.46" width="6.53" height="6.60" fill="#24569f"/><rect x="165.83" y="71.46" width="6.53" height="6.60" fill="#2457a0"/><rect x="170.85" y="71.46" width="6.53" height="6.60" fill="#2558a1"/><rect x="175.88" y="71.46" width="6.53" height="6.60" fill="#265aa3"/><rect x="180.90" y="71.46" width="6.53" height="6.60" fill="#285ca6"/><rect x="185.93" y="71.46" width="6.53" height="6.60" fill="#295fa8"/><rect x="190.95" y="71.46" width="6.53" height="6.60" fill="#2a61aa"/><rect x="195.98" y="71.46" width="26.52" height="6.60" fill="#2c64ad"/><rect x="-20.00" y="76.56" width="26.52" height="6.60" fill="#14337d"/><rect x="5.03" y="76.56" width="6.53" height="6.60" fill="#15347e"/><rect x="10.05" y="76.56" width="6.53" height="6.60" fill="#15357f"/><rect x="15.08" y="76.56" width="6.53" height="6.60" fill="#153681"/><rect x="20.10" y="76.56" width="6.53" height="6.60" fill="#163782"/><rect x="25.12" y="76.56" width="6.53" height="6.60" fill="#163883"/><rect x="30.15" y="76.56" width="6.53" height="6.60" fill="#183b86"/><rect x="35.18" y="76.56" width="6.53" height="6.60" fill="#1a3f89"/><rect x="40.20" y="76.56" width="6.53" height="6.60" fill="#1c438c"/><rect x="45.23" y="76.56" width="6.53" height="6.60" fill="#1e4690"/><rect x="50.25" y="76.56" width="6.53" height="6.60" fill="#204a93"/><rect x="55.28" y="76.56" width="6.53" height="6.60" fill="#224d96"/><rect x="60.30" y="76.56" width="6.53" height="6.60" fill="#24519a"/><rect x="65.33" y="76.56" width="6.53" height="6.60" fill="#25549d"/><rect x="70.35" y="76.56" width="6.53" height="6.60" fill="#2758a1"/><rect x="75.38" y="76.56" width="6.53" height="6.60" fill="#295ba5"/><rect x="80.40" y="76.56" width="6.53" height="6.60" fill="#2b5fa8"/><rect x="85.43" y="76.56" width="6.53" height="6.60" fill="#2c61aa"/><rect x="90.45" y="76.56" width="6.53" height="6.60" fill="#2b61aa"/><rect x="95.48" y="76.56" width="6.53" height="6.60" fill="#2b61aa"/><rect x="100.50" y="76.56" width="6.53" height="6.60" fill="#2b62aa"/><rect x="105.53" y="76.56" width="6.53" height="6.60" fill="#2a62aa"/><rect x="110.55" y="76.56" width="6.53" height="6.60" fill="#2a62aa"/><rect x="115.58" y="76.56" width="6.53" height="6.60" fill="#2860a8"/><rect x="120.60" y="76.56" width="6.53" height="6.60" fill="#265ba4"/><rect x="125.63" y="76.56" width="6.53" height="6.60" fill="#2457a0"/><rect x="130.65" y="76.56" width="6.53" height="6.60" fill="#22539c"/><rect x="135.68" y="76.56" width="6.53" height="6.60" fill="#204f98"/><rect x="140.70" y="76.56" width="6.53" height="6.60" fill="#1e4b95"/><rect x="145.73" y="76.56" width="6.53" height="6.60" fill="#1f4b95"/><rect x="150.75" y="76.56" width="6.53" height="6.60" fill="#1f4c96"/><rect x="155.78" y="76.56" width="6.53" height="6.60" fill="#204d97"/><rect x="160.80" y="76.56" width="6.53" height="6.60" fill="#204e98"/><rect x="165.83" y="76.56" width="6.53" height="6.60" fill="#215099"/><rect x="170.85" y="76.56" width="6.53" height="6.60" fill="#21519a"/><rect x="175.88" y="76.56" width="6.53" height="6.60" fill="#23549d"/><rect x="180.90" y="76.56" width="6.53" height="6.60" fill="#2557a0"/><rect x="185.93" y="76.56" width="6.53" height="6.60" fill="#2659a3"/><rect x="190.95" y="76.56" width="6.53" height="6.60" fill="#285ca6"/><rect x="195.98" y="76.56" width="26.52" height="6.60" fill="#2a5fa9"/><rect x="-20.00" y="81.67" width="26.52" height="6.60" fill="#122f78"/><rect x="5.03" y="81.67" width="6.53" height="6.60" fill="#133079"/><rect x="10.05" y="81.67" width="6.53" height="6.60" fill="#13317a"/><rect x="15.08" y="81.67" width="6.53" height="6.60" fill="#14327b"/><rect x="20.10" y="81.67" width="6.53" height="6.60" fill="#14337c"/><rect x="25.12" y="81.67" width="6.53" height="6.60" fill="#14347d"/><rect x="30.15" y="81.67" width="6.53" height="6.60" fill="#15367f"/><rect x="35.18" y="81.67" width="6.53" height="6.60" fill="#163982"/><rect x="40.20" y="81.67" width="6.53" height="6.60" fill="#183c85"/><rect x="45.23" y="81.67" width="6.53" height="6.60" fill="#193e88"/><rect x="50.25" y="81.67" width="6.53" height="6.60" fill="#1a418a"/><rect x="55.28" y="81.67" width="6.53" height="6.60" fill="#1b448d"/><rect x="60.30" y="81.67" width="6.53" height="6.60" fill="#1d4891"/><rect x="65.33" y="81.67" width="6.53" height="6.60" fill="#204b95"/><rect x="70.35" y="81.67" width="6.53" height="6.60" fill="#224f99"/><rect x="75.38" y="81.67" width="6.53" height="6.60" fill="#24539d"/><rect x="80.40" y="81.67" width="6.53" height="6.60" fill="#2657a0"/><rect x="85.43" y="81.67" width="6.53" height="6.60" fill="#285aa3"/><rect x="90.45" y="81.67" width="6.53" height="6.60" fill="#275aa3"/><rect x="95.48" y="81.67" width="6.53" height="6.60" fill="#275ba3"/><rect x="100.50" y="81.67" width="6.53" height="6.60" fill="#275ba4"/><rect x="105.53" y="81.67" width="6.53" height="6.60" fill="#275ba4"/><rect x="110.55" y="81.67" width="6.53" height="6.60" fill="#265ca4"/><rect x="115.58" y="81.67" width="6.53" height="6.60" fill="#2559a2"/><rect x="120.60" y="81.67" width="6.53" height="6.60" fill="#23559e"/><rect x="125.63" y="81.67" width="6.53" height="6.60" fill="#21519a"/><rect x="130.65" y="81.67" width="6.53" height="6.60" fill="#1f4d96"/><rect x="135.68" y="81.67" width="6.53" height="6.60" fill="#1d4992"/><rect x="140.70" y="81.67" width="6.53" height="6.60" fill="#1c458e"/><rect x="145.73" y="81.67" width="6.53" height="6.60" fill="#1c468f"/><rect x="150.75" y="81.67" width="6.53" height="6.60" fill="#1c4790"/><rect x="155.78" y="81.67" width="6.53" height="6.60" fill="#1d4891"/><rect x="160.80" y="81.67" width="6.53" height="6.60" fill="#1d4992"/><rect x="165.83" y="81.67" width="6.53" height="6.60" fill="#1e4a93"/><rect x="170.85" y="81.67" width="6.53" height="6.60" fill="#1f4c94"/><rect x="175.88" y="81.67" width="6.53" height="6.60" fill="#204e97"/><rect x="180.90" y="81.67" width="6.53" height="6.60" fill="#22519a"/><rect x="185.93" y="81.67" width="6.53" height="6.60" fill="#24549d"/><rect x="190.95" y="81.67" width="6.53" height="6.60" fill="#2657a0"/><rect x="195.98" y="81.67" width="26.52" height="6.60" fill="#275aa3"/><rect x="-20.00" y="86.77" width="26.52" height="6.60" fill="#112c72"/><rect x="5.03" y="86.77" width="6.53" height="6.60" fill="#112d73"/><rect x="10.05" y="86.77" width="6.53" height="6.60" fill="#122e74"/><rect x="15.08" y="86.77" width="6.53" height="6.60" fill="#122f75"/><rect x="20.10" y="86.77" width="6.53" height="6.60" fill="#133076"/><rect x="25.12" y="86.77" width="6.53" height="6.60" fill="#133177"/><rect x="30.15" y="86.77" width="6.53" height="6.60" fill="#14337a"/><rect x="35.18" y="86.77" width="6.53" height="6.60" fill="#15357c"/><rect x="40.20" y="86.77" width="6.53" height="6.60" fill="#16387f"/><rect x="45.23" y="86.77" width="6.53" height="6.60" fill="#173a81"/><rect x="50.25" y="86.77" width="6.53" height="6.60" fill="#183c84"/><rect x="55.28" y="86.77" width="6.53" height="6.60" fill="#193f86"/><rect x="60.30" y="86.77" width="6.53" height="6.60" fill="#1b428a"/><rect x="65.33" y="86.77" width="6.53" height="6.60" fill="#1d458d"/><rect x="70.35" y="86.77" width="6.53" height="6.60" fill="#1f4890"/><rect x="75.38" y="86.77" width="6.53" height="6.60" fill="#204b94"/><rect x="80.40" y="86.77" width="6.53" height="6.60" fill="#224e97"/><rect x="85.43" y="86.77" width="6.53" height="6.60" fill="#235199"/><rect x="90.45" y="86.77" width="6.53" height="6.60" fill="#23519a"/><rect x="95.48" y="86.77" width="6.53" height="6.60" fill="#23529a"/><rect x="100.50" y="86.77" width="6.53" height="6.60" fill="#23539b"/><rect x="105.53" y="86.77" width="6.53" height="6.60" fill="#23539b"/><rect x="110.55" y="86.77" width="6.53" height="6.60" fill="#23549c"/><rect x="115.58" y="86.77" width="6.53" height="6.60" fill="#22529a"/><rect x="120.60" y="86.77" width="6.53" height="6.60" fill="#204f97"/><rect x="125.63" y="86.77" width="6.53" height="6.60" fill="#1f4c94"/><rect x="130.65" y="86.77" width="6.53" height="6.60" fill="#1d4891"/><rect x="135.68" y="86.77" width="6.53" height="6.60" fill="#1c458d"/><rect x="140.70" y="86.77" width="6.53" height="6.60" fill="#1a428a"/><rect x="145.73" y="86.77" width="6.53" height="6.60" fill="#1a438b"/><rect x="150.75" y="86.77" width="6.53" height="6.60" fill="#1b448c"/><rect x="155.78" y="86.77" width="6.53" height="6.60" fill="#1b458d"/><rect x="160.80" y="86.77" width="6.53" height="6.60" fill="#1c458e"/><rect x="165.83" y="86.77" width="6.53" height="6.60" fill="#1c468f"/><rect x="170.85" y="86.77" width="6.53" height="6.60" fill="#1d4890"/><rect x="175.88" y="86.77" width="6.53" height="6.60" fill="#1e4a93"/><rect x="180.90" y="86.77" width="6.53" height="6.60" fill="#204c95"/><rect x="185.93" y="86.77" width="6.53" height="6.60" fill="#214f98"/><rect x="190.95" y="86.77" width="6.53" height="6.60" fill="#23519b"/><rect x="195.98" y="86.77" width="26.52" height="6.60" fill="#24549e"/><rect x="-20.00" y="91.88" width="26.52" height="6.60" fill="#0f296c"/><rect x="5.03" y="91.88" width="6.53" height="6.60" fill="#102a6d"/><rect x="10.05" y="91.88" width="6.53" height="6.60" fill="#102b6e"/><rect x="15.08" y="91.88" width="6.53" height="6.60" fill="#112c6f"/><rect x="20.10" y="91.88" width="6.53" height="6.60" fill="#112d71"/><rect x="25.12" y="91.88" width="6.53" height="6.60" fill="#122e72"/><rect x="30.15" y="91.88" width="6.53" height="6.60" fill="#132f74"/><rect x="35.18" y="91.88" width="6.53" height="6.60" fill="#133276"/><rect x="40.20" y="91.88" width="6.53" height="6.60" fill="#143479"/><rect x="45.23" y="91.88" width="6.53" height="6.60" fill="#15367b"/><rect x="50.25" y="91.88" width="6.53" height="6.60" fill="#16387e"/><rect x="55.28" y="91.88" width="6.53" height="6.60" fill="#173a80"/><rect x="60.30" y="91.88" width="6.53" height="6.60" fill="#183c83"/><rect x="65.33" y="91.88" width="6.53" height="6.60" fill="#1a3f85"/><rect x="70.35" y="91.88" width="6.53" height="6.60" fill="#1b4188"/><rect x="75.38" y="91.88" width="6.53" height="6.60" fill="#1d438b"/><rect x="80.40" y="91.88" width="6.53" height="6.60" fill="#1e468d"/><rect x="85.43" y="91.88" width="6.53" height="6.60" fill="#1f488f"/><rect x="90.45" y="91.88" width="6.53" height="6.60" fill="#1f4990"/><rect x="95.48" y="91.88" width="6.53" height="6.60" fill="#1f4991"/><rect x="100.50" y="91.88" width="6.53" height="6.60" fill="#1f4a92"/><rect x="105.53" y="91.88" width="6.53" height="6.60" fill="#1f4b93"/><rect x="110.55" y="91.88" width="6.53" height="6.60" fill="#1f4c94"/><rect x="115.58" y="91.88" width="6.53" height="6.60" fill="#1f4b92"/><rect x="120.60" y="91.88" width="6.53" height="6.60" fill="#1d4890"/><rect x="125.63" y="91.88" width="6.53" height="6.60" fill="#1c468e"/><rect x="130.65" y="91.88" width="6.53" height="6.60" fill="#1b448b"/><rect x="135.68" y="91.88" width="6.53" height="6.60" fill="#1a4289"/><rect x="140.70" y="91.88" width="6.53" height="6.60" fill="#193f86"/><rect x="145.73" y="91.88" width="6.53" height="6.60" fill="#194087"/><rect x="150.75" y="91.88" width="6.53" height="6.60" fill="#194088"/><rect x="155.78" y="91.88" width="6.53" height="6.60" fill="#1a4188"/><rect x="160.80" y="91.88" width="6.53" height="6.60" fill="#1a4289"/><rect x="165.83" y="91.88" width="6.53" height="6.60" fill="#1a428a"/><rect x="170.85" y="91.88" width="6.53" height="6.60" fill="#1b438b"/><rect x="175.88" y="91.88" width="6.53" height="6.60" fill="#1c468e"/><rect x="180.90" y="91.88" width="6.53" height="6.60" fill="#1d4890"/><rect x="185.93" y="91.88" width="6.53" height="6.60" fill="#1e4a93"/><rect x="190.95" y="91.88" width="6.53" height="6.60" fill="#204c95"/><rect x="195.98" y="91.88" width="26.52" height="6.60" fill="#214e98"/><rect x="-20.00" y="96.98" width="26.52" height="6.60" fill="#0e2666"/><rect x="5.03" y="96.98" width="6.53" height="6.60" fill="#0f2767"/><rect x="10.05" y="96.98" width="6.53" height="6.60" fill="#0f2868"/><rect x="15.08" y="96.98" width="6.53" height="6.60" fill="#10296a"/><rect x="20.10" y="96.98" width="6.53" height="6.60" fill="#102a6b"/><rect x="25.12" y="96.98" width="6.53" height="6.60" fill="#112a6c"/><rect x="30.15" y="96.98" width="6.53" height="6.60" fill="#112c6e"/><rect x="35.18" y="96.98" width="6.53" height="6.60" fill="#122e71"/><rect x="40.20" y="96.98" width="6.53" height="6.60" fill="#132f73"/><rect x="45.23" y="96.98" width="6.53" height="6.60" fill="#143175"/><rect x="50.25" y="96.98" width="6.53" height="6.60" fill="#143377"/><rect x="55.28" y="96.98" width="6.53" height="6.60" fill="#153579"/><rect x="60.30" y="96.98" width="6.53" height="6.60" fill="#16367b"/><rect x="65.33" y="96.98" width="6.53" height="6.60" fill="#17387e"/><rect x="70.35" y="96.98" width="6.53" height="6.60" fill="#183a80"/><rect x="75.38" y="96.98" width="6.53" height="6.60" fill="#193c82"/><rect x="80.40" y="96.98" width="6.53" height="6.60" fill="#1a3d84"/><rect x="85.43" y="96.98" width="6.53" height="6.60" fill="#1a3f85"/><rect x="90.45" y="96.98" width="6.53" height="6.60" fill="#1b4087"/><rect x="95.48" y="96.98" width="6.53" height="6.60" fill="#1b4188"/><rect x="100.50" y="96.98" width="6.53" height="6.60" fill="#1b4289"/><rect x="105.53" y="96.98" width="6.53" height="6.60" fill="#1b438a"/><rect x="110.55" y="96.98" width="6.53" height="6.60" fill="#1c448c"/><rect x="115.58" y="96.98" width="6.53" height="6.60" fill="#1b438b"/><rect x="120.60" y="96.98" width="6.53" height="6.60" fill="#1b4289"/><rect x="125.63" y="96.98" width="6.53" height="6.60" fill="#1a4087"/><rect x="130.65" y="96.98" width="6.53" height="6.60" fill="#193f86"/><rect x="135.68" y="96.98" width="6.53" height="6.60" fill="#183e84"/><rect x="140.70" y="96.98" width="6.53" height="6.60" fill="#183c82"/><rect x="145.73" y="96.98" width="6.53" height="6.60" fill="#183d83"/><rect x="150.75" y="96.98" width="6.53" height="6.60" fill="#183d83"/><rect x="155.78" y="96.98" width="6.53" height="6.60" fill="#183e84"/><rect x="160.80" y="96.98" width="6.53" height="6.60" fill="#183e85"/><rect x="165.83" y="96.98" width="6.53" height="6.60" fill="#193f86"/><rect x="170.85" y="96.98" width="6.53" height="6.60" fill="#193f87"/><rect x="175.88" y="96.98" width="6.53" height="6.60" fill="#1a4189"/><rect x="180.90" y="96.98" width="6.53" height="6.60" fill="#1b438b"/><rect x="185.93" y="96.98" width="6.53" height="6.60" fill="#1c458d"/><rect x="190.95" y="96.98" width="6.53" height="6.60" fill="#1c4690"/><rect x="195.98" y="96.98" width="26.52" height="6.60" fill="#1d4892"/><rect x="-20.00" y="102.08" width="26.52" height="6.60" fill="#0d2360"/><rect x="5.03" y="102.08" width="6.53" height="6.60" fill="#0d2461"/><rect x="10.05" y="102.08" width="6.53" height="6.60" fill="#0e2563"/><rect x="15.08" y="102.08" width="6.53" height="6.60" fill="#0e2664"/><rect x="20.10" y="102.08" width="6.53" height="6.60" fill="#0f2766"/><rect x="25.12" y="102.08" width="6.53" height="6.60" fill="#0f2867"/><rect x="30.15" y="102.08" width="6.53" height="6.60" fill="#102969"/><rect x="35.18" y="102.08" width="6.53" height="6.60" fill="#112a6b"/><rect x="40.20" y="102.08" width="6.53" height="6.60" fill="#112c6d"/><rect x="45.23" y="102.08" width="6.53" height="6.60" fill="#122d6f"/><rect x="50.25" y="102.08" width="6.53" height="6.60" fill="#132f70"/><rect x="55.28" y="102.08" width="6.53" height="6.60" fill="#133072"/><rect x="60.30" y="102.08" width="6.53" height="6.60" fill="#143274"/><rect x="65.33" y="102.08" width="6.53" height="6.60" fill="#153376"/><rect x="70.35" y="102.08" width="6.53" height="6.60" fill="#153477"/><rect x="75.38" y="102.08" width="6.53" height="6.60" fill="#163679"/><rect x="80.40" y="102.08" width="6.53" height="6.60" fill="#17377b"/><rect x="85.43" y="102.08" width="6.53" height="6.60" fill="#17387c"/><rect x="90.45" y="102.08" width="6.53" height="6.60" fill="#18397e"/><rect x="95.48" y="102.08" width="6.53" height="6.60" fill="#183a7f"/><rect x="100.50" y="102.08" width="6.53" height="6.60" fill="#183b81"/><rect x="105.53" y="102.08" width="6.53" height="6.60" fill="#193c82"/><rect x="110.55" y="102.08" width="6.53" height="6.60" fill="#193d83"/><rect x="115.58" y="102.08" width="6.53" height="6.60" fill="#193d83"/><rect x="120.60" y="102.08" width="6.53" height="6.60" fill="#183c82"/><rect x="125.63" y="102.08" width="6.53" height="6.60" fill="#183c81"/><rect x="130.65" y="102.08" width="6.53" height="6.60" fill="#183b80"/><rect x="135.68" y="102.08" width="6.53" height="6.60" fill="#173a7f"/><rect x="140.70" y="102.08" width="6.53" height="6.60" fill="#173a7e"/><rect x="145.73" y="102.08" width="6.53" height="6.60" fill="#173a7e"/><rect x="150.75" y="102.08" width="6.53" height="6.60" fill="#173a7f"/><rect x="155.78" y="102.08" width="6.53" height="6.60" fill="#173b80"/><rect x="160.80" y="102.08" width="6.53" height="6.60" fill="#173b80"/><rect x="165.83" y="102.08" width="6.53" height="6.60" fill="#183c81"/><rect x="170.85" y="102.08" width="6.53" height="6.60" fill="#183c82"/><rect x="175.88" y="102.08" width="6.53" height="6.60" fill="#193e84"/><rect x="180.90" y="102.08" width="6.53" height="6.60" fill="#193f86"/><rect x="185.93" y="102.08" width="6.53" height="6.60" fill="#1a4188"/><rect x="190.95" y="102.08" width="6.53" height="6.60" fill="#1a428a"/><rect x="195.98" y="102.08" width="26.52" height="6.60" fill="#1b448c"/><rect x="-20.00" y="107.19" width="26.52" height="6.60" fill="#0c215a"/><rect x="5.03" y="107.19" width="6.53" height="6.60" fill="#0d225c"/><rect x="10.05" y="107.19" width="6.53" height="6.60" fill="#0d225d"/><rect x="15.08" y="107.19" width="6.53" height="6.60" fill="#0d235f"/><rect x="20.10" y="107.19" width="6.53" height="6.60" fill="#0e2460"/><rect x="25.12" y="107.19" width="6.53" height="6.60" fill="#0e2561"/><rect x="30.15" y="107.19" width="6.53" height="6.60" fill="#0f2663"/><rect x="35.18" y="107.19" width="6.53" height="6.60" fill="#102865"/><rect x="40.20" y="107.19" width="6.53" height="6.60" fill="#102966"/><rect x="45.23" y="107.19" width="6.53" height="6.60" fill="#112a68"/><rect x="50.25" y="107.19" width="6.53" height="6.60" fill="#112c69"/><rect x="55.28" y="107.19" width="6.53" height="6.60" fill="#122d6b"/><rect x="60.30" y="107.19" width="6.53" height="6.60" fill="#122e6c"/><rect x="65.33" y="107.19" width="6.53" height="6.60" fill="#132f6e"/><rect x="70.35" y="107.19" width="6.53" height="6.60" fill="#143070"/><rect x="75.38" y="107.19" width="6.53" height="6.60" fill="#143171"/><rect x="80.40" y="107.19" width="6.53" height="6.60" fill="#153373"/><rect x="85.43" y="107.19" width="6.53" height="6.60" fill="#163474"/><rect x="90.45" y="107.19" width="6.53" height="6.60" fill="#163576"/><rect x="95.48" y="107.19" width="6.53" height="6.60" fill="#163677"/><rect x="100.50" y="107.19" width="6.53" height="6.60" fill="#173779"/><rect x="105.53" y="107.19" width="6.53" height="6.60" fill="#17387a"/><rect x="110.55" y="107.19" width="6.53" height="6.60" fill="#18397b"/><rect x="115.58" y="107.19" width="6.53" height="6.60" fill="#18397c"/><rect x="120.60" y="107.19" width="6.53" height="6.60" fill="#17387b"/><rect x="125.63" y="107.19" width="6.53" height="6.60" fill="#17387a"/><rect x="130.65" y="107.19" width="6.53" height="6.60" fill="#17377a"/><rect x="135.68" y="107.19" width="6.53" height="6.60" fill="#163779"/><rect x="140.70" y="107.19" width="6.53" height="6.60" fill="#163779"/><rect x="145.73" y="107.19" width="6.53" height="6.60" fill="#163779"/><rect x="150.75" y="107.19" width="6.53" height="6.60" fill="#16387a"/><rect x="155.78" y="107.19" width="6.53" height="6.60" fill="#17387b"/><rect x="160.80" y="107.19" width="6.53" height="6.60" fill="#17397b"/><rect x="165.83" y="107.19" width="6.53" height="6.60" fill="#17397c"/><rect x="170.85" y="107.19" width="6.53" height="6.60" fill="#173a7d"/><rect x="175.88" y="107.19" width="6.53" height="6.60" fill="#183b7f"/><rect x="180.90" y="107.19" width="6.53" height="6.60" fill="#183d81"/><rect x="185.93" y="107.19" width="6.53" height="6.60" fill="#193e83"/><rect x="190.95" y="107.19" width="6.53" height="6.60" fill="#193f85"/><rect x="195.98" y="107.19" width="26.52" height="6.60" fill="#1a4187"/><rect x="-20.00" y="112.29" width="26.52" height="6.60" fill="#0b1e55"/><rect x="5.03" y="112.29" width="6.53" height="6.60" fill="#0c1f56"/><rect x="10.05" y="112.29" width="6.53" height="6.60" fill="#0c2058"/><rect x="15.08" y="112.29" width="6.53" height="6.60" fill="#0d2159"/><rect x="20.10" y="112.29" width="6.53" height="6.60" fill="#0d225b"/><rect x="25.12" y="112.29" width="6.53" height="6.60" fill="#0d235c"/><rect x="30.15" y="112.29" width="6.53" height="6.60" fill="#0e245d"/><rect x="35.18" y="112.29" width="6.53" height="6.60" fill="#0e255e"/><rect x="40.20" y="112.29" width="6.53" height="6.60" fill="#0f2660"/><rect x="45.23" y="112.29" width="6.53" height="6.60" fill="#0f2761"/><rect x="50.25" y="112.29" width="6.53" height="6.60" fill="#102862"/><rect x="55.28" y="112.29" width="6.53" height="6.60" fill="#102963"/><rect x="60.30" y="112.29" width="6.53" height="6.60" fill="#112a65"/><rect x="65.33" y="112.29" width="6.53" height="6.60" fill="#112b66"/><rect x="70.35" y="112.29" width="6.53" height="6.60" fill="#122c68"/><rect x="75.38" y="112.29" width="6.53" height="6.60" fill="#132d69"/><rect x="80.40" y="112.29" width="6.53" height="6.60" fill="#132e6a"/><rect x="85.43" y="112.29" width="6.53" height="6.60" fill="#142f6c"/><rect x="90.45" y="112.29" width="6.53" height="6.60" fill="#14306d"/><rect x="95.48" y="112.29" width="6.53" height="6.60" fill="#15316f"/><rect x="100.50" y="112.29" width="6.53" height="6.60" fill="#153270"/><rect x="105.53" y="112.29" width="6.53" height="6.60" fill="#163372"/><rect x="110.55" y="112.29" width="6.53" height="6.60" fill="#163473"/><rect x="115.58" y="112.29" width="6.53" height="6.60" fill="#163474"/><rect x="120.60" y="112.29" width="6.53" height="6.60" fill="#163474"/><rect x="125.63" y="112.29" width="6.53" height="6.60" fill="#163474"/><rect x="130.65" y="112.29" width="6.53" height="6.60" fill="#163474"/><rect x="135.68" y="112.29" width="6.53" height="6.60" fill="#153474"/><rect x="140.70" y="112.29" width="6.53" height="6.60" fill="#153474"/><rect x="145.73" y="112.29" width="6.53" height="6.60" fill="#153474"/><rect x="150.75" y="112.29" width="6.53" height="6.60" fill="#163575"/><rect x="155.78" y="112.29" width="6.53" height="6.60" fill="#163576"/><rect x="160.80" y="112.29" width="6.53" height="6.60" fill="#163676"/><rect x="165.83" y="112.29" width="6.53" height="6.60" fill="#173777"/><rect x="170.85" y="112.29" width="6.53" height="6.60" fill="#173878"/><rect x="175.88" y="112.29" width="6.53" height="6.60" fill="#17397a"/><rect x="180.90" y="112.29" width="6.53" height="6.60" fill="#183a7c"/><rect x="185.93" y="112.29" width="6.53" height="6.60" fill="#183b7e"/><rect x="190.95" y="112.29" width="6.53" height="6.60" fill="#183d80"/><rect x="195.98" y="112.29" width="26.52" height="6.60" fill="#193e82"/><rect x="-20.00" y="117.40" width="26.52" height="26.60" fill="#0b1c4f"/><rect x="5.03" y="117.40" width="6.53" height="26.60" fill="#0b1d51"/><rect x="10.05" y="117.40" width="6.53" height="26.60" fill="#0b1d52"/><rect x="15.08" y="117.40" width="6.53" height="26.60" fill="#0c1e54"/><rect x="20.10" y="117.40" width="6.53" height="26.60" fill="#0c1f55"/><rect x="25.12" y="117.40" width="6.53" height="26.60" fill="#0c2056"/><rect x="30.15" y="117.40" width="6.53" height="26.60" fill="#0d2157"/><rect x="35.18" y="117.40" width="6.53" height="26.60" fill="#0d2258"/><rect x="40.20" y="117.40" width="6.53" height="26.60" fill="#0e2359"/><rect x="45.23" y="117.40" width="6.53" height="26.60" fill="#0e245a"/><rect x="50.25" y="117.40" width="6.53" height="26.60" fill="#0e255b"/><rect x="55.28" y="117.40" width="6.53" height="26.60" fill="#0f265c"/><rect x="60.30" y="117.40" width="6.53" height="26.60" fill="#0f275d"/><rect x="65.33" y="117.40" width="6.53" height="26.60" fill="#10275e"/><rect x="70.35" y="117.40" width="6.53" height="26.60" fill="#102860"/><rect x="75.38" y="117.40" width="6.53" height="26.60" fill="#112961"/><rect x="80.40" y="117.40" width="6.53" height="26.60" fill="#122a62"/><rect x="85.43" y="117.40" width="6.53" height="26.60" fill="#122b64"/><rect x="90.45" y="117.40" width="6.53" height="26.60" fill="#132b65"/><rect x="95.48" y="117.40" width="6.53" height="26.60" fill="#132c67"/><rect x="100.50" y="117.40" width="6.53" height="26.60" fill="#142d68"/><rect x="105.53" y="117.40" width="6.53" height="26.60" fill="#142e6a"/><rect x="110.55" y="117.40" width="6.53" height="26.60" fill="#152f6b"/><rect x="115.58" y="117.40" width="6.53" height="26.60" fill="#15306c"/><rect x="120.60" y="117.40" width="6.53" height="26.60" fill="#15306d"/><rect x="125.63" y="117.40" width="6.53" height="26.60" fill="#15306d"/><rect x="130.65" y="117.40" width="6.53" height="26.60" fill="#15306e"/><rect x="135.68" y="117.40" width="6.53" height="26.60" fill="#14306e"/><rect x="140.70" y="117.40" width="6.53" height="26.60" fill="#14306e"/><rect x="145.73" y="117.40" width="6.53" height="26.60" fill="#15316f"/><rect x="150.75" y="117.40" width="6.53" height="26.60" fill="#153270"/><rect x="155.78" y="117.40" width="6.53" height="26.60" fill="#153371"/><rect x="160.80" y="117.40" width="6.53" height="26.60" fill="#163471"/><rect x="165.83" y="117.40" width="6.53" height="26.60" fill="#163472"/><rect x="170.85" y="117.40" width="6.53" height="26.60" fill="#163573"/><rect x="175.88" y="117.40" width="6.53" height="26.60" fill="#173675"/><rect x="180.90" y="117.40" width="6.53" height="26.60" fill="#173877"/><rect x="185.93" y="117.40" width="6.53" height="26.60" fill="#173979"/><rect x="190.95" y="117.40" width="6.53" height="26.60" fill="#173a7b"/><rect x="195.98" y="117.40" width="26.52" height="26.60" fill="#183b7d"/></g>
<path d="M-5,-5 L2,-5 C15,20 35,45 48,67 L58,130 L-5,130Z" fill="#183a7c" fill-opacity=".4" filter="url(#b6)"/>
<path d="M118,130 C115,95 125,75 150,68 L210,62 L210,130Z" fill="#13306c" fill-opacity=".35" filter="url(#b6)"/>
<path d="M72,-5 L62,25.5 C85,29 100,28 110,26 C140,20 170,8 205,-2 L205,-5Z" fill="#2c64b0" fill-opacity=".75" filter="url(#b15)"/>
<path d="M-5,-5 L72,-5 L62,25.5 C45,22 20,10 2,2 Z" fill="#3a74be" fill-opacity=".3" filter="url(#b15)"/>
<path d="M2,2 C20,10 45,22 62,25.5 L48,64 C36,45 20,22 2,2Z" fill="#4c88c6" fill-opacity=".4" filter="url(#b2)"/>
<path d="M62,25.5 C85,29 100,28 110,26 C140,20 170,8 205,-2 L205,14 C170,26 140,38 110,44 C90,47 72,44 58,38Z" fill="#5ea0d8" fill-opacity=".6" filter="url(#b3)"/>
<path d="M56,74 C80,72 100,64 118,55 C140,44 165,30 205,16 L205,8 C170,20 140,34 118,42 C100,47 80,47 62,44Z" fill="#5592cc" fill-opacity=".35" filter="url(#b3)"/>
<path d="M48,67 C46,56 53,42 66,36 C78,32 92,34 106,37 C96,50 78,66 58,73 C52,74 48.5,71 48,67Z" fill="#6aa0d4" fill-opacity=".38" filter="url(#b2)"/>
<path d="M35,92 C60,85 90,76 131,62 L160,52 L160,60 C115,74 78,88 40,97 Z" fill="#4a82c2" fill-opacity=".28" filter="url(#b3)"/>
<g fill="none">
<path d="M2,2 C20,10 45,22 62,25.5 C85,29 100,28 110,26 C140,20 170,8 205,-2" stroke="#8cc0ec" stroke-opacity=".32" stroke-width="2.2" filter="url(#b15)"/>
<path d="M72,-2 L62,25.5 L48,64" stroke="#80b4e4" stroke-opacity=".25" stroke-width="1.2" filter="url(#b1)"/>
<path d="M49,69 C51,74 57,75 65,72" stroke="#8cc0ec" stroke-opacity=".3" stroke-width="1.2" filter="url(#b1)"/>
<path d="M96,66 C130,48 165,28 203,10" stroke="#80b8e8" stroke-opacity=".15" stroke-width="1" filter="url(#b05)"/>
<path d="M104,64 C135,48 170,30 203,18" stroke="#80b8e8" stroke-opacity=".12" stroke-width="1" filter="url(#b05)"/>
<path d="M117,98.4 C118,88 122,80 126.3,78.6 C132,72 138,67 143.5,65.5 C150,63 158,62 165.8,61.5 L203,58" stroke="#5a92d0" stroke-opacity=".35" stroke-width="2" filter="url(#b1)"/>
</g>

</symbol></svg>
<div id="metal" class="abs"></div>
<div id="streaks" class="abs"></div>
<div id="streaks2" class="abs"></div>
<div id="mhoriz" class="abs"></div>
<div id="sep" class="abs"></div>
<div id="sep2" class="abs"></div>
<div id="title" class="abs">8 Computer beobachten</div>
<div class="abs tl red" style="left:8px"></div>
<div class="abs tl ora" style="left:29px"></div>
<div class="abs tl grn" style="left:50px"></div>
<div class="abs" id="pill"></div>

<!-- nav segmented -->
<div class="abs" id="nav"><i id="navdiv"></i>
<svg class="abs" style="left:0;top:0" width="52" height="22" viewBox="0 0 52 22">
<path d="M9,11 L17.5,6.5 L17.5,16 Z" fill="#777"/>
<path d="M34.5,6.5 L43,11 L34.5,16 Z" fill="#777"/>
</svg></div>

<!-- binoculars -->
<svg class="abs" style="left:108px;top:28px" width="24" height="22" viewBox="0 0 24 22">
<defs>
<linearGradient id="bino" x1="0" y1="0" x2="1" y2="0">
<stop offset="0" stop-color="#101010"/><stop offset=".3" stop-color="#a8a8a8"/><stop offset=".5" stop-color="#6a6a6a"/><stop offset="1" stop-color="#141414"/>
</linearGradient>
<linearGradient id="binv" x1="0" y1="0" x2="0" y2="1">
<stop offset="0" stop-color="#fff" stop-opacity=".15"/><stop offset=".45" stop-color="#fff" stop-opacity="0"/><stop offset=".5" stop-color="#000" stop-opacity=".5"/><stop offset=".62" stop-color="#000" stop-opacity="0"/>
</linearGradient>
</defs>
<rect x="6" y="1.2" width="4.2" height="5.4" rx="1.4" fill="url(#bino)"/>
<rect x="14" y="1.2" width="4.2" height="5.4" rx="1.4" fill="url(#bino)"/>
<path d="M4.3,6 L11,6 L11,20.4 L1.4,20.4 L1.4,17.2 Z" fill="url(#bino)"/>
<path d="M13.1,6 L20,6 L23,17.2 L23,20.4 L13.1,20.4 Z" fill="url(#bino)"/>
<path d="M4.3,6 L11,6 L11,20.4 L1.4,20.4 L1.4,17.2 Z" fill="url(#binv)"/>
<path d="M13.1,6 L20,6 L23,17.2 L23,20.4 L13.1,20.4 Z" fill="url(#binv)"/>
<rect x="10.4" y="6.5" width="3.2" height="6" fill="#1a1a1a"/>
<ellipse cx="6.2" cy="18.3" rx="4" ry="1.4" fill="#d8a8b8" stroke="#1a1a1a" stroke-width=".6"/>
<ellipse cx="18" cy="18.3" rx="4" ry="1.4" fill="#d8a8b8" stroke="#1a1a1a" stroke-width=".6"/>
</svg>

<!-- radar -->
<svg class="abs" style="left:141px;top:27px" width="24" height="24" viewBox="0 0 24 24">
<g fill="none" stroke="#8a8a94">
<circle cx="12.2" cy="11.6" r="10.6" stroke-width="1" stroke-opacity=".7"/>
<circle cx="12.2" cy="11.6" r="8" stroke-width="1.2"/>
<circle cx="12.2" cy="11.6" r="5.4" stroke-width="1.2"/>
<circle cx="12.2" cy="11.6" r="2.8" stroke-width="1.2"/>
</g>
<path d="M11.5,11.5 L11.5,22.5 L14,20 L16,24 L18,23 L16,19 L19.5,19 Z" fill="#111" stroke="#fff" stroke-width=".8"/>
</svg>

<!-- note -->
<svg class="abs" style="left:209px;top:27px" width="24" height="24" viewBox="0 0 24 24">
<path d="M2.2,6 L19.2,3.5 L21.1,20.5 L3.5,22.4 Z" fill="#f6f6f6" stroke="#9a9a9a" stroke-width=".6"/>
<g stroke="#7a7a7a" stroke-width=".8" stroke-dasharray="1.5 .8 2 .8 1 .8">
<path d="M6,11 L15.5,10"/><path d="M6.5,13.8 L15.5,12.8"/><path d="M7,16.6 L16,15.6"/>
</g>
<path d="M10,7.5 L13,5" stroke="#505a70" stroke-width="1"/>
<ellipse cx="13.5" cy="4.8" rx="2.2" ry="1.6" transform="rotate(-35 13.5 4.8)" fill="#1a50d0"/>
<ellipse cx="16" cy="3" rx="2.6" ry="2" transform="rotate(-35 16 3)" fill="#2a70f0"/>
<ellipse cx="15.3" cy="2.5" rx="1.2" ry=".7" transform="rotate(-35 15.3 2.5)" fill="#b0d0ff"/>
</svg>

<!-- lock closed -->
<svg class="abs" style="left:244px;top:26px" width="20" height="25" viewBox="0 0 20 25">
<defs>
<linearGradient id="brass" x1="0" y1="0" x2="0" y2="1">
<stop offset="0" stop-color="#f4d8b0"/><stop offset=".15" stop-color="#dcac78"/><stop offset=".6" stop-color="#c8945c"/><stop offset="1" stop-color="#a06a34"/>
</linearGradient>
<linearGradient id="shk" x1="0" y1="0" x2="1" y2="0">
<stop offset="0" stop-color="#e8e8e8"/><stop offset=".5" stop-color="#9a9a9a"/><stop offset="1" stop-color="#505050"/>
</linearGradient>
</defs>
<path d="M5.6,12 L5.6,8.6 A4.5,5 0 0 1 14.6,8.6 L14.6,12" fill="none" stroke="#2a2a2a" stroke-width="3.4"/>
<path d="M5.6,12 L5.6,8.6 A4.5,5 0 0 1 14.6,8.6 L14.6,12" fill="none" stroke="url(#shk)" stroke-width="1.5"/>
<rect x="1.8" y="11.5" width="16.4" height="11.6" rx="1.2" fill="url(#brass)" stroke="#6a4a2a" stroke-width=".7"/><rect x="2.6" y="12.5" width="1.6" height="10" fill="#f8e0c0" opacity=".5"/>
<g stroke="#b08050" stroke-width=".5" opacity=".6"><path d="M2.5,15 H17.5"/><path d="M2.5,18 H17.5"/><path d="M2.5,21 H17.5"/></g>
</svg>

<!-- lock open -->
<svg class="abs" style="left:275px;top:26px" width="26" height="25" viewBox="0 0 26 25">
<path d="M12.6,12 L12.6,9 A4.4,4.8 0 0 1 21.4,9 L21.4,12.4" fill="none" stroke="#2a2a2a" stroke-width="3.4"/>
<path d="M12.6,12 L12.6,9 A4.4,4.8 0 0 1 21.4,9 L21.4,12.4" fill="none" stroke="url(#shk)" stroke-width="1.5"/>
<rect x="1.5" y="11.5" width="16" height="11.6" rx="1.2" fill="url(#brass)" stroke="#6a4a2a" stroke-width=".7"/><rect x="2.3" y="12.5" width="1.6" height="10" fill="#f8e0c0" opacity=".5"/>
<g stroke="#b08050" stroke-width=".5" opacity=".6"><path d="M2.2,15 H16.3"/><path d="M2.2,18 H16.3"/><path d="M2.2,21 H16.3"/></g>
</svg>

<!-- monitor -->
<svg class="abs" style="left:374px;top:32px" width="17" height="18" viewBox="0 0 17 18">
<defs>
<linearGradient id="scrn" x1="0" y1="0" x2="0" y2="1"><stop offset="0" stop-color="#2a3aa0"/><stop offset="1" stop-color="#5a78d8"/></linearGradient>
</defs>
<rect x="1" y="1" width="15" height="11" rx="1" fill="#f4f4f4" stroke="#9a9a9a" stroke-width=".7"/>
<rect x="2.5" y="2.3" width="12" height="8.2" fill="url(#scrn)"/>
<path d="M1,12 L16,12 L16,17 L13.5,17 L12.5,14.5 L4.5,14.5 L3.5,17 L1,17 Z" fill="#f4f4f4" stroke="#9a9a9a" stroke-width=".7"/>
</svg>

<!-- slider 1 -->
<div class="abs track" style="left:395px;width:75px"></div>
<svg class="abs" style="left:395px;top:32px" width="75" height="6" viewBox="0 0 75 6">
<g stroke="#6a6a6a" stroke-width="1">
<path d="M6.5,1 V4.5"/><path d="M15.5,1 V4.5"/><path d="M24.5,1 V4.5"/><path d="M33.5,1 V4.5"/><path d="M42.5,1 V4.5"/><path d="M51.5,1 V4.5"/><path d="M60.5,1 V4.5"/><path d="M69,1 V4.5"/>
</g></svg>
<svg class="abs thumb" style="left:457px;top:35px" width="14" height="15" viewBox="0 0 14 15">
<defs>
<linearGradient id="thb" x1="0" y1="0" x2="0" y2="1">
<stop offset="0" stop-color="#8890d8"/><stop offset=".5" stop-color="#b8c0f0"/><stop offset=".52" stop-color="#5a98e8"/><stop offset="1" stop-color="#d0eaff"/>
</linearGradient>
<linearGradient id="thg" x1="0" y1="0" x2="0" y2="1">
<stop offset="0" stop-color="#e8e8e8"/><stop offset=".5" stop-color="#f4f4f4"/><stop offset=".52" stop-color="#c8c8c8"/><stop offset="1" stop-color="#f0f0f0"/>
</linearGradient>
</defs>
<path d="M7,1 L12.6,7 L12.6,11.5 A2.5,2.5 0 0 1 10.1,14 L3.9,14 A2.5,2.5 0 0 1 1.4,11.5 L1.4,7 Z" fill="url(#thb)" stroke="#101a70" stroke-width="1"/>
</svg>

<!-- grid icon -->
<svg class="abs" style="left:475px;top:33px" width="18" height="18" viewBox="0 0 18 18">
<defs><linearGradient id="gs" x1="0" y1="0" x2="0" y2="1"><stop offset="0" stop-color="#1a2290"/><stop offset="1" stop-color="#5070d8"/></linearGradient>
<g id="mm"><path d="M0,0 H7.6 V8 H5.8 L5.3,6.6 H2.3 L1.8,8 H0 Z" fill="#f2f2f2" stroke="#a0a0a0" stroke-width=".4"/><rect x=".7" y=".6" width="6.2" height="4.6" fill="url(#gs)"/></g></defs>
<use href="#mm" x=".6" y=".5"/><use href="#mm" x="9.4" y=".5"/><use href="#mm" x=".6" y="9.3"/><use href="#mm" x="9.4" y="9.3"/>
</svg>

<!-- timer 1 -->
<svg class="abs" style="left:507px;top:30px" width="19" height="19" viewBox="0 0 19 19">
<circle cx="3.8" cy="3.8" r="1.6" fill="none" stroke="#6070a8" stroke-width="1"/>
<rect x="8.6" y="1.2" width="3" height="1.6" fill="#5a6aa8"/>
<circle cx="10" cy="11" r="6.6" fill="#f8f8f8" stroke="#6a88c8" stroke-width="1.7"/>
<circle cx="10" cy="11" r="5.6" fill="none" stroke="#c8d8f0" stroke-width=".6"/>
<path d="M10,11 L9.6,4.6 L13,5.6 Z" fill="#f89020"/>
<path d="M10,11 L5.6,14.2" stroke="#e83010" stroke-width="1.2"/>
<circle cx="10" cy="11" r="1" fill="#e83010"/>
</svg>

<!-- slider 2 -->
<div class="abs track" style="left:529px;width:75px"></div>
<svg class="abs thumb" style="left:531px;top:35px" width="14" height="15" viewBox="0 0 14 15">
<path d="M7,1 L12.6,7 L12.6,11.5 A2.5,2.5 0 0 1 10.1,14 L3.9,14 A2.5,2.5 0 0 1 1.4,11.5 L1.4,7 Z" fill="url(#thg)" stroke="#7a7a7a" stroke-width="1"/>
</svg>

<!-- timer 2 -->
<svg class="abs" style="left:605px;top:29px" width="21" height="22" viewBox="0 0 21 22">
<circle cx="4.2" cy="4" r="2" fill="none" stroke="#6070a8" stroke-width="1.1"/>
<rect x="9.2" y="1" width="3.6" height="1.8" fill="#5a6aa8"/>
<circle cx="10.5" cy="12" r="8" fill="#f8f8f8" stroke="#6a88c8" stroke-width="1.9"/>
<circle cx="10.5" cy="12" r="6.8" fill="none" stroke="#c8d8f0" stroke-width=".7"/>
<path d="M10.5,12 L10,4.3 L14.3,5.5 Z" fill="#f89020"/>
<path d="M10.5,12 L5.2,15.8" stroke="#e83010" stroke-width="1.4"/>
<circle cx="10.5" cy="12" r="1.2" fill="#e83010"/>
</svg>

<!-- checker -->
<div class="abs" id="checker"></div>

<!-- slider 3 -->
<div class="abs track" style="left:660px;width:75px"></div>
<svg class="abs" style="left:660px;top:32px" width="75" height="6" viewBox="0 0 75 6">
<g stroke="#6a6a6a" stroke-width="1">
<path d="M6.5,1 V4.5"/><path d="M27.5,1 V4.5"/><path d="M47.5,1 V4.5"/><path d="M68.5,1 V4.5"/>
</g></svg>
<svg class="abs thumb" style="left:701px;top:35px" width="14" height="15" viewBox="0 0 14 15">
<path d="M7,1 L12.6,7 L12.6,11.5 A2.5,2.5 0 0 1 10.1,14 L3.9,14 A2.5,2.5 0 0 1 1.4,11.5 L1.4,7 Z" fill="url(#thb)" stroke="#101a70" stroke-width="1"/>
</svg>

<!-- color -->
<div class="abs" id="colors"></div>

<div id="panel" class="abs"></div>
<div id="panelin" class="abs"></div>

<!-- grip -->
<svg class="abs" style="left:753px;top:619px" width="14" height="14" viewBox="0 0 14 14">
<g stroke-width="1" stroke-dasharray="1 1">
<path d="M2.5,13.5 L13,3" stroke="#3a3a3a"/><path d="M3.5,13.5 L13,4" stroke="#e8e8e8"/>
<path d="M6.5,13.5 L13,7" stroke="#3a3a3a"/><path d="M7.5,13.5 L13,8" stroke="#e8e8e8"/>
<path d="M10.5,13.5 L13,11" stroke="#3a3a3a"/><path d="M11.5,13.5 L13,12" stroke="#e8e8e8"/>
</g></svg>

<div class="abs tile" style="left:31px;top:95px"><div class="abs tw"></div><div class="abs ti"></div><div class="abs scr" style="left:9px;top:9px;width:201px;height:127px"><svg class="mb" width="201" height="4" viewBox="0 0 201 4"><rect width="201" height="4" fill="#f2f2f2"/><circle cx="0.8" cy="1" r=".9" fill="#111"/><rect x="3.5" y=".6" width="1.6" height="2.8" fill="#3a80e8"/><rect x="8.6" y="1.20" width="6.7" height="1.20" fill="#8a8a8a" opacity=".6"/><rect x="17.2" y="1.20" width="6.2" height="1.20" fill="#8a8a8a" opacity=".6"/><rect x="25.5" y="1.20" width="10.0" height="1.20" fill="#8a8a8a" opacity=".6"/><rect x="38.1" y="1.20" width="10.8" height="1.20" fill="#8a8a8a" opacity=".6"/><rect x="51.6" y="1.20" width="5.9" height="1.20" fill="#8a8a8a" opacity=".6"/><rect x="62.3" y="1.20" width="6.7" height="1.20" fill="#8a8a8a" opacity=".6"/><rect x="71.7" y="1.20" width="4.0" height="1.20" fill="#8a8a8a" opacity=".6"/><rect x="183.0" y="1.0" width="1.6" height="2.0" fill="#444"/><rect x="186.0" y="1.0" width="1.6" height="2.0" fill="#888"/><rect x="190.0" y="1.20" width="9.0" height="1.20" fill="#8a8a8a" opacity=".6"/></svg><svg class="dk" style="top:4px" width="201" height="123"><use href="#wp"/></svg><i class="mbsh" style="top:4px"></i><i class="hd" style="left:186px;top:6.4px;width:5.7px;height:6px"></i><i class="hdl" style="left:183px;top:14px"></i><div class="dock" style="left:31px;width:140px;height:11px"><i class="di" style="left:1.5px;width:7px;height:7px;top:2.5px;background:radial-gradient(circle at 35% 30%,#c8d0f0,#5468c4 75%)"></i><i class="di" style="left:10.2px;width:7px;height:7px;top:2.5px;background:radial-gradient(circle at 35% 30%,#c0c8d0,#4a88d8 75%)"></i><i class="di" style="left:18.8px;width:7px;height:7px;top:2.5px;background:radial-gradient(circle at 35% 30%,#90a8d8,#3c64b0 75%)"></i><i class="di" style="left:27.5px;width:7px;height:7px;top:2.5px;background:radial-gradient(circle at 35% 30%,#e8c838,#3a8ad8 75%)"></i><i class="di" style="left:36.1px;width:7px;height:7px;top:2.5px;background:radial-gradient(circle at 35% 30%,#d8b888,#b89058 75%)"></i><i class="di" style="left:44.8px;width:7px;height:7px;top:2.5px;background:radial-gradient(circle at 35% 30%,#e8f0e8,#58b048 75%)"></i><i class="di" style="left:53.4px;width:7px;height:7px;top:2.5px;background:radial-gradient(circle at 35% 30%,#e88820,#2a2a30 75%)"></i><i class="di" style="left:62.0px;width:7px;height:7px;top:2.5px;background:radial-gradient(circle at 35% 30%,#80c0f0,#2060c8 75%)"></i><i class="di" style="left:70.7px;width:7px;height:7px;top:2.5px;background:radial-gradient(circle at 35% 30%,#e8c040,#3070d0 75%)"></i><i class="di" style="left:79.4px;width:7px;height:7px;top:2.5px;background:radial-gradient(circle at 35% 30%,#f0a040,#c86020 75%)"></i><i class="di" style="left:88.0px;width:7px;height:7px;top:2.5px;background:radial-gradient(circle at 35% 30%,#d03030,#f0f0f0 75%)"></i><i class="di" style="left:96.7px;width:7px;height:7px;top:2.5px;background:radial-gradient(circle at 35% 30%,#c0e0ff,#2070e0 75%)"></i><i class="di" style="left:105.3px;width:7px;height:7px;top:2.5px;background:radial-gradient(circle at 35% 30%,#a0a0a0,#e8e8e8 75%)"></i><i class="dsep" style="left:115.0px"></i><i class="di" style="left:117.4px;width:7px;height:7px;top:2.5px;background:radial-gradient(circle at 35% 30%,#909090,#d8d8d8 75%)"></i><i class="di" style="left:126.1px;width:7px;height:7px;top:2.5px;background:radial-gradient(circle at 35% 30%,#404040,#707070 75%)"></i></div></div><div class="abs lbl" style="letter-spacing:0px">iMac Ralf</div></div><div class="abs tile" style="left:271px;top:95px"><div class="abs tw"></div><div class="abs ti"></div><div class="abs scr" style="left:9px;top:9px;width:201px;height:127px"><svg class="mb" width="201" height="4" viewBox="0 0 201 4"><rect width="201" height="4" fill="#f2f2f2"/><circle cx="0.8" cy="1" r=".9" fill="#111"/><rect x="3.5" y=".6" width="1.6" height="2.8" fill="#3a80e8"/><rect x="8.6" y="1.20" width="6.7" height="1.20" fill="#8a8a8a" opacity=".6"/><rect x="17.2" y="1.20" width="6.2" height="1.20" fill="#8a8a8a" opacity=".6"/><rect x="25.5" y="1.20" width="10.0" height="1.20" fill="#8a8a8a" opacity=".6"/><rect x="38.1" y="1.20" width="10.8" height="1.20" fill="#8a8a8a" opacity=".6"/><rect x="51.6" y="1.20" width="5.9" height="1.20" fill="#8a8a8a" opacity=".6"/><rect x="62.3" y="1.20" width="6.7" height="1.20" fill="#8a8a8a" opacity=".6"/><rect x="71.7" y="1.20" width="4.0" height="1.20" fill="#8a8a8a" opacity=".6"/><rect x="183.0" y="1.0" width="1.6" height="2.0" fill="#444"/><rect x="186.0" y="1.0" width="1.6" height="2.0" fill="#888"/><rect x="190.0" y="1.20" width="9.0" height="1.20" fill="#8a8a8a" opacity=".6"/></svg><svg class="dk" style="top:4px" width="201" height="123"><use href="#wp"/></svg><i class="mbsh" style="top:4px"></i><i class="hd" style="left:186px;top:6.4px;width:5.7px;height:6px"></i><i class="hdl" style="left:183px;top:14px"></i><div class="dock" style="left:31px;width:140px;height:11px"><i class="di" style="left:1.5px;width:7px;height:7px;top:2.5px;background:radial-gradient(circle at 35% 30%,#c8d0f0,#5468c4 75%)"></i><i class="di" style="left:10.2px;width:7px;height:7px;top:2.5px;background:radial-gradient(circle at 35% 30%,#c0c8d0,#4a88d8 75%)"></i><i class="di" style="left:18.8px;width:7px;height:7px;top:2.5px;background:radial-gradient(circle at 35% 30%,#90a8d8,#3c64b0 75%)"></i><i class="di" style="left:27.5px;width:7px;height:7px;top:2.5px;background:radial-gradient(circle at 35% 30%,#e8c838,#3a8ad8 75%)"></i><i class="di" style="left:36.1px;width:7px;height:7px;top:2.5px;background:radial-gradient(circle at 35% 30%,#d8b888,#b89058 75%)"></i><i class="di" style="left:44.8px;width:7px;height:7px;top:2.5px;background:radial-gradient(circle at 35% 30%,#e8f0e8,#58b048 75%)"></i><i class="di" style="left:53.4px;width:7px;height:7px;top:2.5px;background:radial-gradient(circle at 35% 30%,#e88820,#2a2a30 75%)"></i><i class="di" style="left:62.0px;width:7px;height:7px;top:2.5px;background:radial-gradient(circle at 35% 30%,#80c0f0,#2060c8 75%)"></i><i class="di" style="left:70.7px;width:7px;height:7px;top:2.5px;background:radial-gradient(circle at 35% 30%,#e8c040,#3070d0 75%)"></i><i class="di" style="left:79.4px;width:7px;height:7px;top:2.5px;background:radial-gradient(circle at 35% 30%,#f0a040,#c86020 75%)"></i><i class="di" style="left:88.0px;width:7px;height:7px;top:2.5px;background:radial-gradient(circle at 35% 30%,#d03030,#f0f0f0 75%)"></i><i class="di" style="left:96.7px;width:7px;height:7px;top:2.5px;background:radial-gradient(circle at 35% 30%,#c0e0ff,#2070e0 75%)"></i><i class="di" style="left:105.3px;width:7px;height:7px;top:2.5px;background:radial-gradient(circle at 35% 30%,#a0a0a0,#e8e8e8 75%)"></i><i class="dsep" style="left:115.0px"></i><i class="di" style="left:117.4px;width:7px;height:7px;top:2.5px;background:radial-gradient(circle at 35% 30%,#909090,#d8d8d8 75%)"></i><i class="di" style="left:126.1px;width:7px;height:7px;top:2.5px;background:radial-gradient(circle at 35% 30%,#404040,#707070 75%)"></i></div></div><div class="abs lbl" style="letter-spacing:0px">iMac Rudi</div></div><div class="abs tile" style="left:511px;top:95px"><div class="abs sel"></div><div class="abs tw" style="background:transparent"></div><div class="abs ti"></div><div class="abs scr" style="left:25px;top:10px;width:169px;height:126px"><svg class="mb" width="169" height="3" viewBox="0 0 169 3"><rect width="169" height="3" fill="#f2f2f2"/><circle cx="0.8" cy="1" r=".9" fill="#111"/><rect x="3.7" y=".6" width="1.6" height="1.8" fill="#3a80e8"/><rect x="9.0" y="0.90" width="7.0" height="0.90" fill="#8a8a8a" opacity=".6"/><rect x="18.1" y="0.90" width="6.5" height="0.90" fill="#8a8a8a" opacity=".6"/><rect x="26.8" y="0.90" width="10.5" height="0.90" fill="#8a8a8a" opacity=".6"/><rect x="40.0" y="0.90" width="11.4" height="0.90" fill="#8a8a8a" opacity=".6"/><rect x="54.2" y="0.90" width="6.2" height="0.90" fill="#8a8a8a" opacity=".6"/><rect x="65.5" y="0.90" width="7.0" height="0.90" fill="#8a8a8a" opacity=".6"/><rect x="75.4" y="0.90" width="4.2" height="0.90" fill="#8a8a8a" opacity=".6"/><rect x="150.1" y="0.8" width="1.6" height="1.5" fill="#444"/><rect x="153.2" y="0.8" width="1.6" height="1.5" fill="#888"/><rect x="157.4" y="0.90" width="9.5" height="0.90" fill="#8a8a8a" opacity=".6"/></svg><svg class="dk" style="top:3px" width="169" height="123"><use href="#wp"/></svg><i class="mbsh" style="top:3px"></i><i class="hd" style="left:156.5px;top:4.3px;width:4.5px;height:4.5px"></i><i class="hdl" style="left:154px;top:10px;width:10px"></i><div class="w" style="left:52px;top:17px;width:85px;height:63px">
 <i class="wt" style="height:6px;background:linear-gradient(#e8e8e8,#c4c4c4)"></i>
 <i class="ws" style="left:0;top:6px;width:27px;bottom:3px;background:#fff;border-right:1px solid #c0c0c0"></i>
 <i class="ws" style="left:0;top:14px;width:27px;height:2.5px;background:#8a8a8a"></i>
 <svg class="ws" style="left:0;top:6px" width="85" height="54" viewBox="0 0 85 54">
  <g fill="#9aa0b8"><rect x="2" y="2" width="2.5" height="2"/><rect x="2" y="5.5" width="2.5" height="2"/><rect x="2" y="12.5" width="2.5" height="2" fill="#e0a0c0"/><rect x="2" y="16" width="2.5" height="2" fill="#5070c0"/><rect x="2" y="19.5" width="2.5" height="2" fill="#c08050"/><rect x="2" y="23" width="2.5" height="2" fill="#e0a040"/><rect x="2" y="26.5" width="2.5" height="2" fill="#60a060"/><rect x="2" y="30" width="2.5" height="2" fill="#408040"/><rect x="2" y="33.5" width="2.5" height="2"/><rect x="2" y="37" width="2.5" height="2"/></g>
  <g fill="#b8b8b8"><rect x="6" y="2.5" width="12" height="1"/><rect x="6" y="6" width="10" height="1"/><rect x="6" y="17" width="9" height="1"/><rect x="6" y="20" width="10" height="1"/><rect x="6" y="23.5" width="9" height="1"/><rect x="6" y="27" width="10" height="1"/><rect x="6" y="30.5" width="6" height="1"/><rect x="6" y="34" width="6" height="1"/><rect x="6" y="37.5" width="6" height="1"/></g>
  <path d="M34,19 C46,17 62,13 85,7 L85,20 C66,20 50,21 34,19Z" fill="#e0d4f0" opacity=".8"/>
  <path d="M34,19 C45,16 60,9 85,2 L85,7 C65,12 48,17 34,19Z" fill="#b8a0e0" opacity=".85"/>
  <path d="M53.5,9 L53.5,17" stroke="#a080d0" stroke-width=".8"/>
  <g fill="#a8a8a8"><rect x="34" y="3" width="42" height=".8"/><rect x="34" y="5" width="44" height=".8"/><rect x="38" y="7" width="36" height=".8"/></g>
  <rect x="51.5" y="16" width="5" height="5" fill="#a070d0"/><rect x="52.3" y="16.8" width="2.5" height="1.8" fill="#f0d0ff"/>
  <g fill="#a8a8a8"><rect x="47" y="22.5" width="12" height=".8"/><rect x="48" y="24" width="10" height=".8"/></g>
  <rect x="36.5" y="26.5" width="4" height="4" fill="#6ab0f0"/>
  <circle cx="53" cy="28.5" r="1.8" fill="#4a80d0"/><circle cx="67.8" cy="28" r="1.8" fill="#4a80d0"/>
  <path d="M76.5,33 L80,33 L78.3,36.5 Z" fill="#e04040"/><path d="M29,34.5 L31.5,35.2" stroke="#e080a0" stroke-width="1"/>
  <g fill="#b0b0b0"><rect x="36" y="32" width="5" height=".8"/><rect x="46" y="32" width="14" height=".8"/><rect x="47" y="33.5" width="12" height=".8"/><rect x="63" y="32" width="9" height=".8"/><rect x="64" y="33.5" width="7" height=".8"/></g>
 </svg>
 <i class="wb"></i>
</div>
<div class="w" style="left:29px;top:61px;width:42px;height:14px">
 <i class="wt" style="height:2.5px"></i>
 <i class="ws" style="left:3px;top:4px;width:30px;height:1px;background:#a0a0a0"></i>
 <i class="ws" style="left:3px;top:6px;width:30px;height:1.6px;background:#c0c8d8"></i>
 <i class="ws" style="left:3px;top:6px;width:22px;height:1.6px;background:#5a8ae0"></i>
 <i class="ws" style="left:3px;top:9px;width:20px;height:1px;background:#a8a8a8"></i>
 <i class="ws" style="left:3px;top:11px;width:16px;height:1px;background:#a8a8a8"></i>
 <i class="ws" style="left:35px;top:5px;width:5px;height:3px;background:#e0e0e0;border:.5px solid #999"></i>
</div>
<i class="ws" style="left:158px;top:17px;width:6px;height:5px;background:linear-gradient(135deg,#f0e060,#e060a0 50%,#a070e0)"></i>
<i class="ws" style="left:154px;top:23px;width:14px;height:1px;background:rgba(230,230,240,.6)"></i>
<div class="dock" style="left:32px;width:105px;height:8px"><i class="di" style="left:1.5px;width:5px;height:5px;top:1.5px;background:radial-gradient(circle at 35% 30%,#c8d0f0,#5468c4 75%)"></i><i class="di" style="left:8.1px;width:5px;height:5px;top:1.5px;background:radial-gradient(circle at 35% 30%,#c0c8d0,#4a88d8 75%)"></i><i class="di" style="left:14.6px;width:5px;height:5px;top:1.5px;background:radial-gradient(circle at 35% 30%,#90a8d8,#3c64b0 75%)"></i><i class="di" style="left:21.2px;width:5px;height:5px;top:1.5px;background:radial-gradient(circle at 35% 30%,#e8c838,#3a8ad8 75%)"></i><i class="di" style="left:27.7px;width:5px;height:5px;top:1.5px;background:radial-gradient(circle at 35% 30%,#d8b888,#b89058 75%)"></i><i class="di" style="left:34.2px;width:5px;height:5px;top:1.5px;background:radial-gradient(circle at 35% 30%,#e8f0e8,#58b048 75%)"></i><i class="di" style="left:40.8px;width:5px;height:5px;top:1.5px;background:radial-gradient(circle at 35% 30%,#e88820,#2a2a30 75%)"></i><i class="di" style="left:47.3px;width:5px;height:5px;top:1.5px;background:radial-gradient(circle at 35% 30%,#80c0f0,#2060c8 75%)"></i><i class="di" style="left:53.9px;width:5px;height:5px;top:1.5px;background:radial-gradient(circle at 35% 30%,#e8c040,#3070d0 75%)"></i><i class="di" style="left:60.4px;width:5px;height:5px;top:1.5px;background:radial-gradient(circle at 35% 30%,#f0a040,#c86020 75%)"></i><i class="di" style="left:67.0px;width:5px;height:5px;top:1.5px;background:radial-gradient(circle at 35% 30%,#d03030,#f0f0f0 75%)"></i><i class="di" style="left:73.5px;width:5px;height:5px;top:1.5px;background:radial-gradient(circle at 35% 30%,#c0e0ff,#2070e0 75%)"></i><i class="di" style="left:80.1px;width:5px;height:5px;top:1.5px;background:radial-gradient(circle at 35% 30%,#a0a0a0,#e8e8e8 75%)"></i><i class="dsep" style="left:87.6px"></i><i class="di" style="left:89.3px;width:5px;height:5px;top:1.5px;background:radial-gradient(circle at 35% 30%,#909090,#d8d8d8 75%)"></i><i class="di" style="left:95.8px;width:5px;height:5px;top:1.5px;background:radial-gradient(circle at 35% 30%,#404040,#707070 75%)"></i></div></div><div class="abs lbl" style="letter-spacing:0px">PowerMac Bernhard</div></div><div class="abs tile" style="left:31px;top:268px"><div class="abs tw"></div><div class="abs ti"></div><div class="abs scr" style="left:25px;top:10px;width:169px;height:126px"><svg class="mb" width="169" height="3" viewBox="0 0 169 3"><rect width="169" height="3" fill="#f2f2f2"/><circle cx="0.8" cy="1" r=".9" fill="#111"/><rect x="3.7" y=".6" width="1.6" height="1.8" fill="#3a80e8"/><rect x="9.0" y="0.90" width="7.0" height="0.90" fill="#8a8a8a" opacity=".6"/><rect x="18.1" y="0.90" width="6.5" height="0.90" fill="#8a8a8a" opacity=".6"/><rect x="26.8" y="0.90" width="10.5" height="0.90" fill="#8a8a8a" opacity=".6"/><rect x="40.0" y="0.90" width="11.4" height="0.90" fill="#8a8a8a" opacity=".6"/><rect x="54.2" y="0.90" width="6.2" height="0.90" fill="#8a8a8a" opacity=".6"/><rect x="65.5" y="0.90" width="7.0" height="0.90" fill="#8a8a8a" opacity=".6"/><rect x="75.4" y="0.90" width="4.2" height="0.90" fill="#8a8a8a" opacity=".6"/><rect x="150.1" y="0.8" width="1.6" height="1.5" fill="#444"/><rect x="153.2" y="0.8" width="1.6" height="1.5" fill="#888"/><rect x="157.4" y="0.90" width="9.5" height="0.90" fill="#8a8a8a" opacity=".6"/></svg><svg class="dk" style="top:3px" width="169" height="123"><use href="#wp"/></svg><i class="mbsh" style="top:3px"></i><i class="hd" style="left:156.5px;top:4.3px;width:4.5px;height:4.5px"></i><i class="hdl" style="left:154px;top:10px;width:10px"></i><div class="dock" style="left:32px;width:105px;height:8px"><i class="di" style="left:1.5px;width:5px;height:5px;top:1.5px;background:radial-gradient(circle at 35% 30%,#c8d0f0,#5468c4 75%)"></i><i class="di" style="left:8.1px;width:5px;height:5px;top:1.5px;background:radial-gradient(circle at 35% 30%,#c0c8d0,#4a88d8 75%)"></i><i class="di" style="left:14.6px;width:5px;height:5px;top:1.5px;background:radial-gradient(circle at 35% 30%,#90a8d8,#3c64b0 75%)"></i><i class="di" style="left:21.2px;width:5px;height:5px;top:1.5px;background:radial-gradient(circle at 35% 30%,#e8c838,#3a8ad8 75%)"></i><i class="di" style="left:27.7px;width:5px;height:5px;top:1.5px;background:radial-gradient(circle at 35% 30%,#d8b888,#b89058 75%)"></i><i class="di" style="left:34.2px;width:5px;height:5px;top:1.5px;background:radial-gradient(circle at 35% 30%,#e8f0e8,#58b048 75%)"></i><i class="di" style="left:40.8px;width:5px;height:5px;top:1.5px;background:radial-gradient(circle at 35% 30%,#e88820,#2a2a30 75%)"></i><i class="di" style="left:47.3px;width:5px;height:5px;top:1.5px;background:radial-gradient(circle at 35% 30%,#80c0f0,#2060c8 75%)"></i><i class="di" style="left:53.9px;width:5px;height:5px;top:1.5px;background:radial-gradient(circle at 35% 30%,#e8c040,#3070d0 75%)"></i><i class="di" style="left:60.4px;width:5px;height:5px;top:1.5px;background:radial-gradient(circle at 35% 30%,#f0a040,#c86020 75%)"></i><i class="di" style="left:67.0px;width:5px;height:5px;top:1.5px;background:radial-gradient(circle at 35% 30%,#d03030,#f0f0f0 75%)"></i><i class="di" style="left:73.5px;width:5px;height:5px;top:1.5px;background:radial-gradient(circle at 35% 30%,#c0e0ff,#2070e0 75%)"></i><i class="di" style="left:80.1px;width:5px;height:5px;top:1.5px;background:radial-gradient(circle at 35% 30%,#a0a0a0,#e8e8e8 75%)"></i><i class="dsep" style="left:87.6px"></i><i class="di" style="left:89.3px;width:5px;height:5px;top:1.5px;background:radial-gradient(circle at 35% 30%,#909090,#d8d8d8 75%)"></i><i class="di" style="left:95.8px;width:5px;height:5px;top:1.5px;background:radial-gradient(circle at 35% 30%,#404040,#707070 75%)"></i></div></div><div class="abs lbl" style="letter-spacing:-0.2px">PowerMac Heike</div></div><div class="abs tile" style="left:271px;top:268px"><div class="abs tw"></div><div class="abs ti"></div><div class="abs scr" style="left:25px;top:10px;width:169px;height:126px"><svg class="mb" width="169" height="3" viewBox="0 0 169 3"><rect width="169" height="3" fill="#f2f2f2"/><circle cx="0.8" cy="1" r=".9" fill="#111"/><rect x="3.7" y=".6" width="1.6" height="1.8" fill="#3a80e8"/><rect x="9.0" y="0.90" width="7.0" height="0.90" fill="#8a8a8a" opacity=".6"/><rect x="18.1" y="0.90" width="6.5" height="0.90" fill="#8a8a8a" opacity=".6"/><rect x="26.8" y="0.90" width="10.5" height="0.90" fill="#8a8a8a" opacity=".6"/><rect x="40.0" y="0.90" width="11.4" height="0.90" fill="#8a8a8a" opacity=".6"/><rect x="54.2" y="0.90" width="6.2" height="0.90" fill="#8a8a8a" opacity=".6"/><rect x="65.5" y="0.90" width="7.0" height="0.90" fill="#8a8a8a" opacity=".6"/><rect x="75.4" y="0.90" width="4.2" height="0.90" fill="#8a8a8a" opacity=".6"/><rect x="150.1" y="0.8" width="1.6" height="1.5" fill="#444"/><rect x="153.2" y="0.8" width="1.6" height="1.5" fill="#888"/><rect x="157.4" y="0.90" width="9.5" height="0.90" fill="#8a8a8a" opacity=".6"/></svg><svg class="dk" style="top:3px" width="169" height="123"><use href="#wp"/></svg><i class="mbsh" style="top:3px"></i><i class="hd" style="left:156.5px;top:4.3px;width:4.5px;height:4.5px"></i><i class="hdl" style="left:154px;top:10px;width:10px"></i><div class="w" style="left:12px;top:16px;width:62px;height:41px">
 <i class="wt" style="height:5.5px;background:linear-gradient(#e4e4e4,#b8b8b8)"></i>
 <svg class="ws" style="left:0;top:0" width="62" height="41" viewBox="0 0 62 41">
  <g fill="#9a9a9a"><rect x="2" y="3" width="2" height="1.5"/><rect x="5" y="3" width="2" height="1.5"/><rect x="9" y="3" width="5" height="1.5"/><rect x="44" y="3" width="14" height="1.5" fill="#f0f0f0"/></g>
  <rect x="8.5" y="7.5" width="3.5" height="4" fill="#f8f8f8" stroke="#a0a0a0" stroke-width=".5"/><rect x="10.5" y="9" width="2" height="2" fill="#e04040"/>
  <rect x="29" y="7.5" width="4" height="3.6" rx="1" fill="#d03a3a"/>
  <circle cx="51.4" cy="9.4" r="1.5" fill="#5a90d8"/>
  <g fill="#a8a8a8"><rect x="5" y="12.5" width="12" height=".8" fill="#606060"/><rect x="25" y="12.5" width="11" height=".8"/><rect x="43" y="12.5" width="16" height=".8"/></g>
  <rect x="10" y="17" width="2.6" height="3.6" fill="#5070c0"/><circle cx="31" cy="19" r="1.5" fill="#4a80d0"/>
  <g fill="#a8a8a8"><rect x="6" y="22.3" width="9" height=".8"/><rect x="24" y="22.3" width="14" height=".8"/></g>
 </svg>
 <i class="wb" style="height:2px;background:#c8c8c8"></i>
</div>
<div class="w" style="left:53px;top:34px;width:63px;height:59px;background:#fff">
 <i class="wt" style="height:1.5px;background:#d0d0d0"></i>
 <svg class="ws" style="left:0;top:1.5px" width="63" height="58" viewBox="0 0 63 58">
  <defs><linearGradient id="pk" x1="0" y1="0" x2="0" y2="1"><stop offset="0" stop-color="#efd4d4"/><stop offset="1" stop-color="#ffffff"/></linearGradient></defs>
  <rect x="0" y="0" width="63" height="14" fill="url(#pk)"/>
  <rect x="2.6" y="7.4" width="7" height="2" fill="#d83838"/><rect x="9.8" y="7.2" width="23" height="2.2" fill="#484848"/>
  <rect x="14" y="11.6" width="25" height="1.2" fill="#c8b0b0"/>
  <g fill="#707070"><rect x="2.6" y="16.3" width="21" height=".8"/><rect x="2.6" y="18.3" width="23" height=".8"/><rect x="2.6" y="21" width="22" height=".8"/><rect x="2.6" y="23.3" width="20" height=".8"/><rect x="2.6" y="26" width="23" height=".8"/><rect x="2.6" y="28" width="9" height=".8"/><rect x="2.6" y="30.4" width="19" height=".8"/><rect x="2.6" y="32.4" width="13" height=".8"/></g>
  <path d="M3,36 L6.5,36 L6,39 L7.5,39 L7.5,41.5 L3,41.5 Z" fill="#404040"/>
  <path d="M47,18.5 C42,14 43,7 48.7,5.3 C54,8 56,13 53,19 Z" fill="#b06058"/>
  <path d="M52,19 C56,12 61,8 63,7 L63,34 C58,30 54,25 52,19Z" fill="#d89a98"/>
  <path d="M47,18 C42,15 37,15 33.9,15.8 C37,21 43,22 48,20Z" fill="#e0a890"/>
  <path d="M48,28 C42,31 38,35 36.2,40.8 C42,40 47,36 50,30Z" fill="#4a2818"/>
  <path d="M53,20 L55,43" stroke="#f0e0e0" stroke-width="1.2"/>
  <circle cx="44.5" cy="24" r="6" fill="#e8b818"/><circle cx="43.5" cy="23" r="3.2" fill="#fff060"/>
  <rect x="0" y="44.7" width="63" height="13.3" fill="#e4e4e4"/>
  <rect x="2" y="46.4" width="26" height=".7" fill="#909090"/>
  <rect x="1.8" y="48.2" width="51.6" height="1.3" fill="#c4c4cc"/><rect x="1.8" y="48.2" width="8.6" height="1.3" fill="#4a5ec0"/>
  <rect x="3" y="50.6" width="26" height=".7" fill="#909090"/>
  <rect x="1.8" y="52.4" width="51.6" height="1.3" fill="#c4c4cc"/><rect x="1.8" y="52.4" width="16.4" height="1.3" fill="#4a5ec0"/>
  <rect x="30" y="55.5" width="12" height=".7" fill="#909090"/><rect x="42" y="55.2" width="2" height="1.3" fill="#4a70e0"/>
 </svg>
</div>
<div class="dock" style="left:32px;width:105px;height:8px"><i class="di" style="left:1.5px;width:5px;height:5px;top:1.5px;background:radial-gradient(circle at 35% 30%,#c8d0f0,#5468c4 75%)"></i><i class="di" style="left:8.1px;width:5px;height:5px;top:1.5px;background:radial-gradient(circle at 35% 30%,#c0c8d0,#4a88d8 75%)"></i><i class="di" style="left:14.6px;width:5px;height:5px;top:1.5px;background:radial-gradient(circle at 35% 30%,#90a8d8,#3c64b0 75%)"></i><i class="di" style="left:21.2px;width:5px;height:5px;top:1.5px;background:radial-gradient(circle at 35% 30%,#e8c838,#3a8ad8 75%)"></i><i class="di" style="left:27.7px;width:5px;height:5px;top:1.5px;background:radial-gradient(circle at 35% 30%,#d8b888,#b89058 75%)"></i><i class="di" style="left:34.2px;width:5px;height:5px;top:1.5px;background:radial-gradient(circle at 35% 30%,#e8f0e8,#58b048 75%)"></i><i class="di" style="left:40.8px;width:5px;height:5px;top:1.5px;background:radial-gradient(circle at 35% 30%,#e88820,#2a2a30 75%)"></i><i class="di" style="left:47.3px;width:5px;height:5px;top:1.5px;background:radial-gradient(circle at 35% 30%,#80c0f0,#2060c8 75%)"></i><i class="di" style="left:53.9px;width:5px;height:5px;top:1.5px;background:radial-gradient(circle at 35% 30%,#e8c040,#3070d0 75%)"></i><i class="di" style="left:60.4px;width:5px;height:5px;top:1.5px;background:radial-gradient(circle at 35% 30%,#f0a040,#c86020 75%)"></i><i class="di" style="left:67.0px;width:5px;height:5px;top:1.5px;background:radial-gradient(circle at 35% 30%,#d03030,#f0f0f0 75%)"></i><i class="di" style="left:73.5px;width:5px;height:5px;top:1.5px;background:radial-gradient(circle at 35% 30%,#c0e0ff,#2070e0 75%)"></i><i class="di" style="left:80.1px;width:5px;height:5px;top:1.5px;background:radial-gradient(circle at 35% 30%,#a0a0a0,#e8e8e8 75%)"></i><i class="dsep" style="left:87.6px"></i><i class="di" style="left:89.3px;width:5px;height:5px;top:1.5px;background:radial-gradient(circle at 35% 30%,#909090,#d8d8d8 75%)"></i><i class="di" style="left:95.8px;width:5px;height:5px;top:1.5px;background:radial-gradient(circle at 35% 30%,#404040,#707070 75%)"></i></div></div><div class="abs lbl" style="letter-spacing:-0.2px">PowerMac Klaus</div></div><div class="abs tile" style="left:511px;top:268px"><div class="abs tw"></div><div class="abs ti"></div><div class="abs scr" style="left:31px;top:9px;width:158px;height:127px"><svg class="mb" width="158" height="4" viewBox="0 0 158 4"><rect width="158" height="4" fill="#f2f2f2"/><circle cx="0.8" cy="1" r=".9" fill="#111"/><rect x="4.7" y=".6" width="1.6" height="2.8" fill="#3a80e8"/><rect x="11.6" y="1.20" width="9.0" height="1.20" fill="#8a8a8a" opacity=".6"/><rect x="23.2" y="1.20" width="8.4" height="1.20" fill="#8a8a8a" opacity=".6"/><rect x="34.4" y="1.20" width="13.5" height="1.20" fill="#8a8a8a" opacity=".6"/><rect x="51.4" y="1.20" width="14.6" height="1.20" fill="#8a8a8a" opacity=".6"/><rect x="69.7" y="1.20" width="8.0" height="1.20" fill="#8a8a8a" opacity=".6"/><rect x="84.1" y="1.20" width="9.0" height="1.20" fill="#8a8a8a" opacity=".6"/><rect x="96.8" y="1.20" width="5.4" height="1.20" fill="#8a8a8a" opacity=".6"/><rect x="133.7" y="1.0" width="1.6" height="2.0" fill="#444"/><rect x="137.8" y="1.0" width="1.6" height="2.0" fill="#888"/><rect x="143.2" y="1.20" width="12.2" height="1.20" fill="#8a8a8a" opacity=".6"/></svg><svg class="dk" style="top:4px" width="158" height="123"><use href="#wp"/></svg><i class="mbsh" style="top:4px"></i><i class="hd" style="left:141px;top:5.6px;width:6.5px;height:6.6px"></i><i class="hdl" style="left:138px;top:14px"></i><div class="dock" style="left:8px;width:143px;height:11.5px"><i class="di" style="left:1.5px;width:7.5px;height:7.5px;top:2.5px;background:radial-gradient(circle at 35% 30%,#c8d0f0,#5468c4 75%)"></i><i class="di" style="left:10.3px;width:7.5px;height:7.5px;top:2.5px;background:radial-gradient(circle at 35% 30%,#c0c8d0,#4a88d8 75%)"></i><i class="di" style="left:19.2px;width:7.5px;height:7.5px;top:2.5px;background:radial-gradient(circle at 35% 30%,#90a8d8,#3c64b0 75%)"></i><i class="di" style="left:28.0px;width:7.5px;height:7.5px;top:2.5px;background:radial-gradient(circle at 35% 30%,#e8c838,#3a8ad8 75%)"></i><i class="di" style="left:36.9px;width:7.5px;height:7.5px;top:2.5px;background:radial-gradient(circle at 35% 30%,#d8b888,#b89058 75%)"></i><i class="di" style="left:45.8px;width:7.5px;height:7.5px;top:2.5px;background:radial-gradient(circle at 35% 30%,#e8f0e8,#58b048 75%)"></i><i class="di" style="left:54.6px;width:7.5px;height:7.5px;top:2.5px;background:radial-gradient(circle at 35% 30%,#e88820,#2a2a30 75%)"></i><i class="di" style="left:63.5px;width:7.5px;height:7.5px;top:2.5px;background:radial-gradient(circle at 35% 30%,#80c0f0,#2060c8 75%)"></i><i class="di" style="left:72.3px;width:7.5px;height:7.5px;top:2.5px;background:radial-gradient(circle at 35% 30%,#e8c040,#3070d0 75%)"></i><i class="di" style="left:81.1px;width:7.5px;height:7.5px;top:2.5px;background:radial-gradient(circle at 35% 30%,#f0a040,#c86020 75%)"></i><i class="di" style="left:90.0px;width:7.5px;height:7.5px;top:2.5px;background:radial-gradient(circle at 35% 30%,#d03030,#f0f0f0 75%)"></i><i class="di" style="left:98.8px;width:7.5px;height:7.5px;top:2.5px;background:radial-gradient(circle at 35% 30%,#c0e0ff,#2070e0 75%)"></i><i class="di" style="left:107.7px;width:7.5px;height:7.5px;top:2.5px;background:radial-gradient(circle at 35% 30%,#a0a0a0,#e8e8e8 75%)"></i><i class="dsep" style="left:117.5px"></i><i class="di" style="left:120.1px;width:7.5px;height:7.5px;top:2.5px;background:radial-gradient(circle at 35% 30%,#909090,#d8d8d8 75%)"></i><i class="di" style="left:128.9px;width:7.5px;height:7.5px;top:2.5px;background:radial-gradient(circle at 35% 30%,#404040,#707070 75%)"></i></div></div><div class="abs lbl" style="letter-spacing:-0.2px">PowerMac Ralf</div></div><div class="abs tile" style="left:31px;top:441px"><div class="abs tw"></div><div class="abs ti"></div><div class="abs scr" style="left:25px;top:10px;width:169px;height:126px"><svg class="mb" width="169" height="3" viewBox="0 0 169 3"><rect width="169" height="3" fill="#f2f2f2"/><circle cx="0.8" cy="1" r=".9" fill="#111"/><rect x="3.7" y=".6" width="1.6" height="1.8" fill="#3a80e8"/><rect x="9.0" y="0.90" width="7.0" height="0.90" fill="#8a8a8a" opacity=".6"/><rect x="18.1" y="0.90" width="6.5" height="0.90" fill="#8a8a8a" opacity=".6"/><rect x="26.8" y="0.90" width="10.5" height="0.90" fill="#8a8a8a" opacity=".6"/><rect x="40.0" y="0.90" width="11.4" height="0.90" fill="#8a8a8a" opacity=".6"/><rect x="54.2" y="0.90" width="6.2" height="0.90" fill="#8a8a8a" opacity=".6"/><rect x="65.5" y="0.90" width="7.0" height="0.90" fill="#8a8a8a" opacity=".6"/><rect x="75.4" y="0.90" width="4.2" height="0.90" fill="#8a8a8a" opacity=".6"/><rect x="150.1" y="0.8" width="1.6" height="1.5" fill="#444"/><rect x="153.2" y="0.8" width="1.6" height="1.5" fill="#888"/><rect x="157.4" y="0.90" width="9.5" height="0.90" fill="#8a8a8a" opacity=".6"/></svg><svg class="dk" style="top:3px" width="169" height="123"><use href="#wp"/></svg><i class="mbsh" style="top:3px"></i><i class="hd" style="left:156.5px;top:4.3px;width:4.5px;height:4.5px"></i><i class="hdl" style="left:154px;top:10px;width:10px"></i><i class="ws" style="left:135px;top:15px;width:1.5px;height:6px;background:#f4f4f4"></i><i class="ws" style="left:157px;top:14px;width:4.5px;height:5.5px;background:#f4f4f4"></i><i class="ws" style="left:159.5px;top:14px;width:2px;height:2px;background:#e04040"></i><i class="ws" style="left:153px;top:21px;width:13px;height:1px;background:rgba(220,230,240,.5)"></i><div class="dock" style="left:32px;width:105px;height:8px"><i class="di" style="left:1.5px;width:5px;height:5px;top:1.5px;background:radial-gradient(circle at 35% 30%,#c8d0f0,#5468c4 75%)"></i><i class="di" style="left:8.1px;width:5px;height:5px;top:1.5px;background:radial-gradient(circle at 35% 30%,#c0c8d0,#4a88d8 75%)"></i><i class="di" style="left:14.6px;width:5px;height:5px;top:1.5px;background:radial-gradient(circle at 35% 30%,#90a8d8,#3c64b0 75%)"></i><i class="di" style="left:21.2px;width:5px;height:5px;top:1.5px;background:radial-gradient(circle at 35% 30%,#e8c838,#3a8ad8 75%)"></i><i class="di" style="left:27.7px;width:5px;height:5px;top:1.5px;background:radial-gradient(circle at 35% 30%,#d8b888,#b89058 75%)"></i><i class="di" style="left:34.2px;width:5px;height:5px;top:1.5px;background:radial-gradient(circle at 35% 30%,#e8f0e8,#58b048 75%)"></i><i class="di" style="left:40.8px;width:5px;height:5px;top:1.5px;background:radial-gradient(circle at 35% 30%,#e88820,#2a2a30 75%)"></i><i class="di" style="left:47.3px;width:5px;height:5px;top:1.5px;background:radial-gradient(circle at 35% 30%,#80c0f0,#2060c8 75%)"></i><i class="di" style="left:53.9px;width:5px;height:5px;top:1.5px;background:radial-gradient(circle at 35% 30%,#e8c040,#3070d0 75%)"></i><i class="di" style="left:60.4px;width:5px;height:5px;top:1.5px;background:radial-gradient(circle at 35% 30%,#f0a040,#c86020 75%)"></i><i class="di" style="left:67.0px;width:5px;height:5px;top:1.5px;background:radial-gradient(circle at 35% 30%,#d03030,#f0f0f0 75%)"></i><i class="di" style="left:73.5px;width:5px;height:5px;top:1.5px;background:radial-gradient(circle at 35% 30%,#c0e0ff,#2070e0 75%)"></i><i class="di" style="left:80.1px;width:5px;height:5px;top:1.5px;background:radial-gradient(circle at 35% 30%,#a0a0a0,#e8e8e8 75%)"></i><i class="dsep" style="left:87.6px"></i><i class="di" style="left:89.3px;width:5px;height:5px;top:1.5px;background:radial-gradient(circle at 35% 30%,#909090,#d8d8d8 75%)"></i><i class="di" style="left:95.8px;width:5px;height:5px;top:1.5px;background:radial-gradient(circle at 35% 30%,#404040,#707070 75%)"></i></div></div><div class="abs lbl" style="letter-spacing:0px">PowerMac Timo</div></div><div class="abs tile" style="left:271px;top:441px"><div class="abs tw"></div><div class="abs ti"></div><div class="abs scr" style="left:25px;top:10px;width:169px;height:126px"><svg class="mb" width="169" height="3" viewBox="0 0 169 3"><rect width="169" height="3" fill="#f2f2f2"/><circle cx="0.8" cy="1" r=".9" fill="#111"/><rect x="3.7" y=".6" width="1.6" height="1.8" fill="#3a80e8"/><rect x="9.0" y="0.90" width="7.0" height="0.90" fill="#8a8a8a" opacity=".6"/><rect x="18.1" y="0.90" width="6.5" height="0.90" fill="#8a8a8a" opacity=".6"/><rect x="26.8" y="0.90" width="10.5" height="0.90" fill="#8a8a8a" opacity=".6"/><rect x="40.0" y="0.90" width="11.4" height="0.90" fill="#8a8a8a" opacity=".6"/><rect x="54.2" y="0.90" width="6.2" height="0.90" fill="#8a8a8a" opacity=".6"/><rect x="65.5" y="0.90" width="7.0" height="0.90" fill="#8a8a8a" opacity=".6"/><rect x="75.4" y="0.90" width="4.2" height="0.90" fill="#8a8a8a" opacity=".6"/><rect x="150.1" y="0.8" width="1.6" height="1.5" fill="#444"/><rect x="153.2" y="0.8" width="1.6" height="1.5" fill="#888"/><rect x="157.4" y="0.90" width="9.5" height="0.90" fill="#8a8a8a" opacity=".6"/></svg><svg class="dk" style="top:3px" width="169" height="123"><use href="#wp"/></svg><i class="mbsh" style="top:3px"></i><i class="hd" style="left:156.5px;top:4.3px;width:4.5px;height:4.5px"></i><i class="hdl" style="left:154px;top:10px;width:10px"></i><div class="dock" style="left:32px;width:105px;height:8px"><i class="di" style="left:1.5px;width:5px;height:5px;top:1.5px;background:radial-gradient(circle at 35% 30%,#c8d0f0,#5468c4 75%)"></i><i class="di" style="left:8.1px;width:5px;height:5px;top:1.5px;background:radial-gradient(circle at 35% 30%,#c0c8d0,#4a88d8 75%)"></i><i class="di" style="left:14.6px;width:5px;height:5px;top:1.5px;background:radial-gradient(circle at 35% 30%,#90a8d8,#3c64b0 75%)"></i><i class="di" style="left:21.2px;width:5px;height:5px;top:1.5px;background:radial-gradient(circle at 35% 30%,#e8c838,#3a8ad8 75%)"></i><i class="di" style="left:27.7px;width:5px;height:5px;top:1.5px;background:radial-gradient(circle at 35% 30%,#d8b888,#b89058 75%)"></i><i class="di" style="left:34.2px;width:5px;height:5px;top:1.5px;background:radial-gradient(circle at 35% 30%,#e8f0e8,#58b048 75%)"></i><i class="di" style="left:40.8px;width:5px;height:5px;top:1.5px;background:radial-gradient(circle at 35% 30%,#e88820,#2a2a30 75%)"></i><i class="di" style="left:47.3px;width:5px;height:5px;top:1.5px;background:radial-gradient(circle at 35% 30%,#80c0f0,#2060c8 75%)"></i><i class="di" style="left:53.9px;width:5px;height:5px;top:1.5px;background:radial-gradient(circle at 35% 30%,#e8c040,#3070d0 75%)"></i><i class="di" style="left:60.4px;width:5px;height:5px;top:1.5px;background:radial-gradient(circle at 35% 30%,#f0a040,#c86020 75%)"></i><i class="di" style="left:67.0px;width:5px;height:5px;top:1.5px;background:radial-gradient(circle at 35% 30%,#d03030,#f0f0f0 75%)"></i><i class="di" style="left:73.5px;width:5px;height:5px;top:1.5px;background:radial-gradient(circle at 35% 30%,#c0e0ff,#2070e0 75%)"></i><i class="di" style="left:80.1px;width:5px;height:5px;top:1.5px;background:radial-gradient(circle at 35% 30%,#a0a0a0,#e8e8e8 75%)"></i><i class="dsep" style="left:87.6px"></i><i class="di" style="left:89.3px;width:5px;height:5px;top:1.5px;background:radial-gradient(circle at 35% 30%,#909090,#d8d8d8 75%)"></i><i class="di" style="left:95.8px;width:5px;height:5px;top:1.5px;background:radial-gradient(circle at 35% 30%,#404040,#707070 75%)"></i></div></div><div class="abs lbl" style="letter-spacing:0.2px">Ute Computer</div></div>
</body></html>
